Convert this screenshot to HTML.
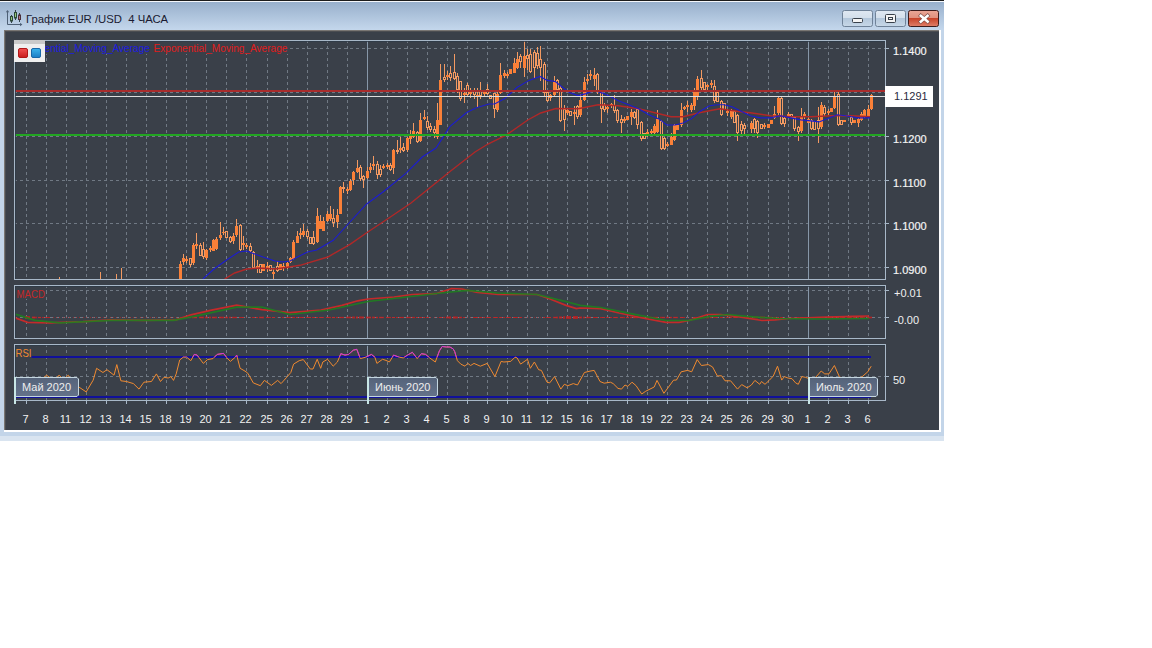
<!DOCTYPE html>
<html><head><meta charset="utf-8"><style>
html,body{margin:0;padding:0;background:#fff;width:1152px;height:648px;overflow:hidden}
svg{display:block;font-family:"Liberation Sans",sans-serif}
</style></head><body>
<svg width="1152" height="648" viewBox="0 0 1152 648">
<defs>
<linearGradient id="tb" x1="0" y1="0" x2="0" y2="1"><stop offset="0" stop-color="#98b0cc"/><stop offset="1" stop-color="#c4d7ec"/></linearGradient>
<linearGradient id="btn" x1="0" y1="0" x2="0" y2="1"><stop offset="0" stop-color="#dfe8f2"/><stop offset="0.5" stop-color="#d3dfeb"/><stop offset="0.5" stop-color="#b3c7db"/><stop offset="1" stop-color="#c8d8e8"/></linearGradient>
<linearGradient id="cls" x1="0" y1="0" x2="0" y2="1"><stop offset="0" stop-color="#eaa696"/><stop offset="0.5" stop-color="#e08f7c"/><stop offset="0.5" stop-color="#c8442a"/><stop offset="1" stop-color="#e0806a"/></linearGradient>
<linearGradient id="rsq" x1="0" y1="0" x2="0" y2="1"><stop offset="0" stop-color="#f25050"/><stop offset="1" stop-color="#c81c1c"/></linearGradient>
<linearGradient id="bsq" x1="0" y1="0" x2="0" y2="1"><stop offset="0" stop-color="#3ab4ec"/><stop offset="1" stop-color="#1a7cc4"/></linearGradient>
<linearGradient id="lbl" x1="0" y1="0" x2="0" y2="1"><stop offset="0" stop-color="#55637a"/><stop offset="1" stop-color="#64728a"/></linearGradient>
</defs>
<rect x="0" y="0" width="944" height="441" fill="#c3d5e9"/>
<rect x="0" y="2" width="944" height="28" fill="url(#tb)"/>
<rect x="0" y="0" width="944" height="1" fill="#1c1c1c"/>
<rect x="0" y="1" width="944" height="1" fill="#f4f7fb"/>
<rect x="0" y="436" width="944" height="5" fill="#d9e4f0"/>
<rect x="4" y="30" width="937" height="402" fill="#ffffff"/>
<rect x="4" y="30" width="935" height="400" fill="#7a7774"/>
<rect x="5" y="31" width="934" height="399" fill="#4b4d51"/>
<rect x="6" y="32" width="933" height="398" fill="#3a4049"/>
<g fill="none" stroke="#4e6076" stroke-width="1"><path d="M7.5 11 V24.5 H21.5"/></g>
<polygon points="5.8,12.3 7.5,10 9.2,12.3" fill="#4e6076"/><polygon points="20,22.8 22.4,24.5 20,26.2" fill="#4e6076"/>
<rect x="11" y="15" width="1" height="8" fill="#34444c"/><rect x="10.5" y="16.5" width="2" height="4.5" fill="#94c47c" stroke="#2e4a38"/>
<rect x="15" y="10" width="1" height="10" fill="#34444c"/><rect x="14.5" y="12.5" width="2" height="5.5" fill="#94c47c" stroke="#2e4a38"/>
<rect x="19" y="13" width="1" height="9" fill="#34444c"/><rect x="18.5" y="15" width="2" height="4.5" fill="#b47482" stroke="#4a2e3a"/>
<text x="26" y="22.5" font-size="11.6" fill="#1a1a30" textLength="142" lengthAdjust="spacingAndGlyphs">График EUR /USD&#160; 4 ЧАСА</text>
<rect x="842.5" y="10.5" width="30" height="16" rx="2" fill="url(#btn)" stroke="#6f8298"/>
<rect x="852.5" y="18.5" width="10" height="4" rx="1" fill="#f4f4f4" stroke="#38404a"/>
<rect x="875.5" y="10.5" width="30" height="16" rx="2" fill="url(#btn)" stroke="#6f8298"/>
<rect x="885.5" y="14.5" width="10" height="8" rx="1" fill="#f4f4f4" stroke="#38404a" stroke-width="1"/>
<rect x="888.5" y="17.5" width="4" height="2" fill="none" stroke="#38404a"/>
<rect x="908.5" y="10.5" width="30" height="16" rx="2" fill="url(#cls)" stroke="#3c1c1c"/>
<path d="M920.8 15.8 L927.6 21.6 M927.6 15.8 L920.8 21.6" stroke="#7a4a44" stroke-width="3.8" stroke-linecap="square"/>
<path d="M920.8 15.8 L927.6 21.6 M927.6 15.8 L920.8 21.6" stroke="#ffffff" stroke-width="2.6" stroke-linecap="square"/>
<line x1="26.5" y1="40" x2="26.5" y2="279" stroke="#707984" stroke-width="1" stroke-dasharray="3 3"/>
<line x1="46.5" y1="40" x2="46.5" y2="279" stroke="#707984" stroke-width="1" stroke-dasharray="3 3"/>
<line x1="66.5" y1="40" x2="66.5" y2="279" stroke="#707984" stroke-width="1" stroke-dasharray="3 3"/>
<line x1="86.5" y1="40" x2="86.5" y2="279" stroke="#707984" stroke-width="1" stroke-dasharray="3 3"/>
<line x1="106.5" y1="40" x2="106.5" y2="279" stroke="#707984" stroke-width="1" stroke-dasharray="3 3"/>
<line x1="126.5" y1="40" x2="126.5" y2="279" stroke="#707984" stroke-width="1" stroke-dasharray="3 3"/>
<line x1="146.5" y1="40" x2="146.5" y2="279" stroke="#707984" stroke-width="1" stroke-dasharray="3 3"/>
<line x1="166.5" y1="40" x2="166.5" y2="279" stroke="#707984" stroke-width="1" stroke-dasharray="3 3"/>
<line x1="186.5" y1="40" x2="186.5" y2="279" stroke="#707984" stroke-width="1" stroke-dasharray="3 3"/>
<line x1="206.5" y1="40" x2="206.5" y2="279" stroke="#707984" stroke-width="1" stroke-dasharray="3 3"/>
<line x1="226.5" y1="40" x2="226.5" y2="279" stroke="#707984" stroke-width="1" stroke-dasharray="3 3"/>
<line x1="246.5" y1="40" x2="246.5" y2="279" stroke="#707984" stroke-width="1" stroke-dasharray="3 3"/>
<line x1="267.5" y1="40" x2="267.5" y2="279" stroke="#707984" stroke-width="1" stroke-dasharray="3 3"/>
<line x1="287.5" y1="40" x2="287.5" y2="279" stroke="#707984" stroke-width="1" stroke-dasharray="3 3"/>
<line x1="307.5" y1="40" x2="307.5" y2="279" stroke="#707984" stroke-width="1" stroke-dasharray="3 3"/>
<line x1="327.5" y1="40" x2="327.5" y2="279" stroke="#707984" stroke-width="1" stroke-dasharray="3 3"/>
<line x1="347.5" y1="40" x2="347.5" y2="279" stroke="#707984" stroke-width="1" stroke-dasharray="3 3"/>
<line x1="387.5" y1="40" x2="387.5" y2="279" stroke="#707984" stroke-width="1" stroke-dasharray="3 3"/>
<line x1="407.5" y1="40" x2="407.5" y2="279" stroke="#707984" stroke-width="1" stroke-dasharray="3 3"/>
<line x1="427.5" y1="40" x2="427.5" y2="279" stroke="#707984" stroke-width="1" stroke-dasharray="3 3"/>
<line x1="447.5" y1="40" x2="447.5" y2="279" stroke="#707984" stroke-width="1" stroke-dasharray="3 3"/>
<line x1="467.5" y1="40" x2="467.5" y2="279" stroke="#707984" stroke-width="1" stroke-dasharray="3 3"/>
<line x1="487.5" y1="40" x2="487.5" y2="279" stroke="#707984" stroke-width="1" stroke-dasharray="3 3"/>
<line x1="507.5" y1="40" x2="507.5" y2="279" stroke="#707984" stroke-width="1" stroke-dasharray="3 3"/>
<line x1="527.5" y1="40" x2="527.5" y2="279" stroke="#707984" stroke-width="1" stroke-dasharray="3 3"/>
<line x1="547.5" y1="40" x2="547.5" y2="279" stroke="#707984" stroke-width="1" stroke-dasharray="3 3"/>
<line x1="567.5" y1="40" x2="567.5" y2="279" stroke="#707984" stroke-width="1" stroke-dasharray="3 3"/>
<line x1="587.5" y1="40" x2="587.5" y2="279" stroke="#707984" stroke-width="1" stroke-dasharray="3 3"/>
<line x1="607.5" y1="40" x2="607.5" y2="279" stroke="#707984" stroke-width="1" stroke-dasharray="3 3"/>
<line x1="627.5" y1="40" x2="627.5" y2="279" stroke="#707984" stroke-width="1" stroke-dasharray="3 3"/>
<line x1="647.5" y1="40" x2="647.5" y2="279" stroke="#707984" stroke-width="1" stroke-dasharray="3 3"/>
<line x1="667.5" y1="40" x2="667.5" y2="279" stroke="#707984" stroke-width="1" stroke-dasharray="3 3"/>
<line x1="687.5" y1="40" x2="687.5" y2="279" stroke="#707984" stroke-width="1" stroke-dasharray="3 3"/>
<line x1="707.5" y1="40" x2="707.5" y2="279" stroke="#707984" stroke-width="1" stroke-dasharray="3 3"/>
<line x1="727.5" y1="40" x2="727.5" y2="279" stroke="#707984" stroke-width="1" stroke-dasharray="3 3"/>
<line x1="747.5" y1="40" x2="747.5" y2="279" stroke="#707984" stroke-width="1" stroke-dasharray="3 3"/>
<line x1="768.5" y1="40" x2="768.5" y2="279" stroke="#707984" stroke-width="1" stroke-dasharray="3 3"/>
<line x1="788.5" y1="40" x2="788.5" y2="279" stroke="#707984" stroke-width="1" stroke-dasharray="3 3"/>
<line x1="828.5" y1="40" x2="828.5" y2="279" stroke="#707984" stroke-width="1" stroke-dasharray="3 3"/>
<line x1="848.5" y1="40" x2="848.5" y2="279" stroke="#707984" stroke-width="1" stroke-dasharray="3 3"/>
<line x1="868.5" y1="40" x2="868.5" y2="279" stroke="#707984" stroke-width="1" stroke-dasharray="3 3"/>
<line x1="26.5" y1="285" x2="26.5" y2="338" stroke="#707984" stroke-width="1" stroke-dasharray="3 3"/>
<line x1="46.5" y1="285" x2="46.5" y2="338" stroke="#707984" stroke-width="1" stroke-dasharray="3 3"/>
<line x1="66.5" y1="285" x2="66.5" y2="338" stroke="#707984" stroke-width="1" stroke-dasharray="3 3"/>
<line x1="86.5" y1="285" x2="86.5" y2="338" stroke="#707984" stroke-width="1" stroke-dasharray="3 3"/>
<line x1="106.5" y1="285" x2="106.5" y2="338" stroke="#707984" stroke-width="1" stroke-dasharray="3 3"/>
<line x1="126.5" y1="285" x2="126.5" y2="338" stroke="#707984" stroke-width="1" stroke-dasharray="3 3"/>
<line x1="146.5" y1="285" x2="146.5" y2="338" stroke="#707984" stroke-width="1" stroke-dasharray="3 3"/>
<line x1="166.5" y1="285" x2="166.5" y2="338" stroke="#707984" stroke-width="1" stroke-dasharray="3 3"/>
<line x1="186.5" y1="285" x2="186.5" y2="338" stroke="#707984" stroke-width="1" stroke-dasharray="3 3"/>
<line x1="206.5" y1="285" x2="206.5" y2="338" stroke="#707984" stroke-width="1" stroke-dasharray="3 3"/>
<line x1="226.5" y1="285" x2="226.5" y2="338" stroke="#707984" stroke-width="1" stroke-dasharray="3 3"/>
<line x1="246.5" y1="285" x2="246.5" y2="338" stroke="#707984" stroke-width="1" stroke-dasharray="3 3"/>
<line x1="267.5" y1="285" x2="267.5" y2="338" stroke="#707984" stroke-width="1" stroke-dasharray="3 3"/>
<line x1="287.5" y1="285" x2="287.5" y2="338" stroke="#707984" stroke-width="1" stroke-dasharray="3 3"/>
<line x1="307.5" y1="285" x2="307.5" y2="338" stroke="#707984" stroke-width="1" stroke-dasharray="3 3"/>
<line x1="327.5" y1="285" x2="327.5" y2="338" stroke="#707984" stroke-width="1" stroke-dasharray="3 3"/>
<line x1="347.5" y1="285" x2="347.5" y2="338" stroke="#707984" stroke-width="1" stroke-dasharray="3 3"/>
<line x1="387.5" y1="285" x2="387.5" y2="338" stroke="#707984" stroke-width="1" stroke-dasharray="3 3"/>
<line x1="407.5" y1="285" x2="407.5" y2="338" stroke="#707984" stroke-width="1" stroke-dasharray="3 3"/>
<line x1="427.5" y1="285" x2="427.5" y2="338" stroke="#707984" stroke-width="1" stroke-dasharray="3 3"/>
<line x1="447.5" y1="285" x2="447.5" y2="338" stroke="#707984" stroke-width="1" stroke-dasharray="3 3"/>
<line x1="467.5" y1="285" x2="467.5" y2="338" stroke="#707984" stroke-width="1" stroke-dasharray="3 3"/>
<line x1="487.5" y1="285" x2="487.5" y2="338" stroke="#707984" stroke-width="1" stroke-dasharray="3 3"/>
<line x1="507.5" y1="285" x2="507.5" y2="338" stroke="#707984" stroke-width="1" stroke-dasharray="3 3"/>
<line x1="527.5" y1="285" x2="527.5" y2="338" stroke="#707984" stroke-width="1" stroke-dasharray="3 3"/>
<line x1="547.5" y1="285" x2="547.5" y2="338" stroke="#707984" stroke-width="1" stroke-dasharray="3 3"/>
<line x1="567.5" y1="285" x2="567.5" y2="338" stroke="#707984" stroke-width="1" stroke-dasharray="3 3"/>
<line x1="587.5" y1="285" x2="587.5" y2="338" stroke="#707984" stroke-width="1" stroke-dasharray="3 3"/>
<line x1="607.5" y1="285" x2="607.5" y2="338" stroke="#707984" stroke-width="1" stroke-dasharray="3 3"/>
<line x1="627.5" y1="285" x2="627.5" y2="338" stroke="#707984" stroke-width="1" stroke-dasharray="3 3"/>
<line x1="647.5" y1="285" x2="647.5" y2="338" stroke="#707984" stroke-width="1" stroke-dasharray="3 3"/>
<line x1="667.5" y1="285" x2="667.5" y2="338" stroke="#707984" stroke-width="1" stroke-dasharray="3 3"/>
<line x1="687.5" y1="285" x2="687.5" y2="338" stroke="#707984" stroke-width="1" stroke-dasharray="3 3"/>
<line x1="707.5" y1="285" x2="707.5" y2="338" stroke="#707984" stroke-width="1" stroke-dasharray="3 3"/>
<line x1="727.5" y1="285" x2="727.5" y2="338" stroke="#707984" stroke-width="1" stroke-dasharray="3 3"/>
<line x1="747.5" y1="285" x2="747.5" y2="338" stroke="#707984" stroke-width="1" stroke-dasharray="3 3"/>
<line x1="768.5" y1="285" x2="768.5" y2="338" stroke="#707984" stroke-width="1" stroke-dasharray="3 3"/>
<line x1="788.5" y1="285" x2="788.5" y2="338" stroke="#707984" stroke-width="1" stroke-dasharray="3 3"/>
<line x1="828.5" y1="285" x2="828.5" y2="338" stroke="#707984" stroke-width="1" stroke-dasharray="3 3"/>
<line x1="848.5" y1="285" x2="848.5" y2="338" stroke="#707984" stroke-width="1" stroke-dasharray="3 3"/>
<line x1="868.5" y1="285" x2="868.5" y2="338" stroke="#707984" stroke-width="1" stroke-dasharray="3 3"/>
<line x1="26.5" y1="344" x2="26.5" y2="400" stroke="#707984" stroke-width="1" stroke-dasharray="3 3"/>
<line x1="46.5" y1="344" x2="46.5" y2="400" stroke="#707984" stroke-width="1" stroke-dasharray="3 3"/>
<line x1="66.5" y1="344" x2="66.5" y2="400" stroke="#707984" stroke-width="1" stroke-dasharray="3 3"/>
<line x1="86.5" y1="344" x2="86.5" y2="400" stroke="#707984" stroke-width="1" stroke-dasharray="3 3"/>
<line x1="106.5" y1="344" x2="106.5" y2="400" stroke="#707984" stroke-width="1" stroke-dasharray="3 3"/>
<line x1="126.5" y1="344" x2="126.5" y2="400" stroke="#707984" stroke-width="1" stroke-dasharray="3 3"/>
<line x1="146.5" y1="344" x2="146.5" y2="400" stroke="#707984" stroke-width="1" stroke-dasharray="3 3"/>
<line x1="166.5" y1="344" x2="166.5" y2="400" stroke="#707984" stroke-width="1" stroke-dasharray="3 3"/>
<line x1="186.5" y1="344" x2="186.5" y2="400" stroke="#707984" stroke-width="1" stroke-dasharray="3 3"/>
<line x1="206.5" y1="344" x2="206.5" y2="400" stroke="#707984" stroke-width="1" stroke-dasharray="3 3"/>
<line x1="226.5" y1="344" x2="226.5" y2="400" stroke="#707984" stroke-width="1" stroke-dasharray="3 3"/>
<line x1="246.5" y1="344" x2="246.5" y2="400" stroke="#707984" stroke-width="1" stroke-dasharray="3 3"/>
<line x1="267.5" y1="344" x2="267.5" y2="400" stroke="#707984" stroke-width="1" stroke-dasharray="3 3"/>
<line x1="287.5" y1="344" x2="287.5" y2="400" stroke="#707984" stroke-width="1" stroke-dasharray="3 3"/>
<line x1="307.5" y1="344" x2="307.5" y2="400" stroke="#707984" stroke-width="1" stroke-dasharray="3 3"/>
<line x1="327.5" y1="344" x2="327.5" y2="400" stroke="#707984" stroke-width="1" stroke-dasharray="3 3"/>
<line x1="347.5" y1="344" x2="347.5" y2="400" stroke="#707984" stroke-width="1" stroke-dasharray="3 3"/>
<line x1="387.5" y1="344" x2="387.5" y2="400" stroke="#707984" stroke-width="1" stroke-dasharray="3 3"/>
<line x1="407.5" y1="344" x2="407.5" y2="400" stroke="#707984" stroke-width="1" stroke-dasharray="3 3"/>
<line x1="427.5" y1="344" x2="427.5" y2="400" stroke="#707984" stroke-width="1" stroke-dasharray="3 3"/>
<line x1="447.5" y1="344" x2="447.5" y2="400" stroke="#707984" stroke-width="1" stroke-dasharray="3 3"/>
<line x1="467.5" y1="344" x2="467.5" y2="400" stroke="#707984" stroke-width="1" stroke-dasharray="3 3"/>
<line x1="487.5" y1="344" x2="487.5" y2="400" stroke="#707984" stroke-width="1" stroke-dasharray="3 3"/>
<line x1="507.5" y1="344" x2="507.5" y2="400" stroke="#707984" stroke-width="1" stroke-dasharray="3 3"/>
<line x1="527.5" y1="344" x2="527.5" y2="400" stroke="#707984" stroke-width="1" stroke-dasharray="3 3"/>
<line x1="547.5" y1="344" x2="547.5" y2="400" stroke="#707984" stroke-width="1" stroke-dasharray="3 3"/>
<line x1="567.5" y1="344" x2="567.5" y2="400" stroke="#707984" stroke-width="1" stroke-dasharray="3 3"/>
<line x1="587.5" y1="344" x2="587.5" y2="400" stroke="#707984" stroke-width="1" stroke-dasharray="3 3"/>
<line x1="607.5" y1="344" x2="607.5" y2="400" stroke="#707984" stroke-width="1" stroke-dasharray="3 3"/>
<line x1="627.5" y1="344" x2="627.5" y2="400" stroke="#707984" stroke-width="1" stroke-dasharray="3 3"/>
<line x1="647.5" y1="344" x2="647.5" y2="400" stroke="#707984" stroke-width="1" stroke-dasharray="3 3"/>
<line x1="667.5" y1="344" x2="667.5" y2="400" stroke="#707984" stroke-width="1" stroke-dasharray="3 3"/>
<line x1="687.5" y1="344" x2="687.5" y2="400" stroke="#707984" stroke-width="1" stroke-dasharray="3 3"/>
<line x1="707.5" y1="344" x2="707.5" y2="400" stroke="#707984" stroke-width="1" stroke-dasharray="3 3"/>
<line x1="727.5" y1="344" x2="727.5" y2="400" stroke="#707984" stroke-width="1" stroke-dasharray="3 3"/>
<line x1="747.5" y1="344" x2="747.5" y2="400" stroke="#707984" stroke-width="1" stroke-dasharray="3 3"/>
<line x1="768.5" y1="344" x2="768.5" y2="400" stroke="#707984" stroke-width="1" stroke-dasharray="3 3"/>
<line x1="788.5" y1="344" x2="788.5" y2="400" stroke="#707984" stroke-width="1" stroke-dasharray="3 3"/>
<line x1="828.5" y1="344" x2="828.5" y2="400" stroke="#707984" stroke-width="1" stroke-dasharray="3 3"/>
<line x1="848.5" y1="344" x2="848.5" y2="400" stroke="#707984" stroke-width="1" stroke-dasharray="3 3"/>
<line x1="868.5" y1="344" x2="868.5" y2="400" stroke="#707984" stroke-width="1" stroke-dasharray="3 3"/>
<line x1="14" y1="48.5" x2="885" y2="48.5" stroke="#707984" stroke-dasharray="3 3"/>
<line x1="14" y1="92.5" x2="885" y2="92.5" stroke="#707984" stroke-dasharray="3 3"/>
<line x1="14" y1="136.5" x2="885" y2="136.5" stroke="#707984" stroke-dasharray="3 3"/>
<line x1="14" y1="180.5" x2="885" y2="180.5" stroke="#707984" stroke-dasharray="3 3"/>
<line x1="14" y1="223.5" x2="885" y2="223.5" stroke="#707984" stroke-dasharray="3 3"/>
<line x1="14" y1="267.5" x2="885" y2="267.5" stroke="#707984" stroke-dasharray="3 3"/>
<line x1="14" y1="290.5" x2="885" y2="290.5" stroke="#707984" stroke-dasharray="3 3"/>
<line x1="14" y1="317.5" x2="885" y2="317.5" stroke="#707984" stroke-dasharray="3 3"/>
<line x1="14" y1="376.5" x2="885" y2="376.5" stroke="#707984" stroke-dasharray="3 3"/>
<line x1="367.5" y1="40" x2="367.5" y2="279" stroke="#8797a8" stroke-width="1"/>
<line x1="367.5" y1="285" x2="367.5" y2="338" stroke="#8797a8" stroke-width="1"/>
<line x1="367.5" y1="344" x2="367.5" y2="400" stroke="#8797a8" stroke-width="1"/>
<line x1="808.5" y1="40" x2="808.5" y2="279" stroke="#8797a8" stroke-width="1"/>
<line x1="808.5" y1="285" x2="808.5" y2="338" stroke="#8797a8" stroke-width="1"/>
<line x1="808.5" y1="344" x2="808.5" y2="400" stroke="#8797a8" stroke-width="1"/>
<rect x="15" y="41" width="275" height="13" fill="#3a4049"/>
<text x="16" y="52" font-size="10.1" fill="#1c1ce0">Exponential_Moving_Average</text>
<text x="153.5" y="52" font-size="10.1" fill="#e01c1c">Exponential_Moving_Average</text>
<clipPath id="cm"><rect x="15" y="41" width="870" height="238"/></clipPath>
<g clip-path="url(#cm)">
<rect x="59" y="277" width="1" height="2" fill="#f39a62"/>
<rect x="100" y="272" width="1" height="7" fill="#f39a62"/>
<rect x="116" y="274" width="1" height="5" fill="#f39a62"/>
<rect x="121" y="268" width="1" height="11" fill="#f39a62"/>
<rect x="180" y="261" width="1" height="18" fill="#f39a62"/>
<rect x="179" y="264" width="3" height="15" fill="#fa8038"/>
<rect x="183" y="254" width="1" height="11" fill="#f39a62"/>
<rect x="182" y="258" width="3" height="4" fill="#fa8038"/>
<rect x="186" y="256" width="1" height="7" fill="#f39a62"/>
<rect x="185" y="259" width="3" height="2" fill="#fa8038"/>
<rect x="190" y="258" width="1" height="9" fill="#f39a62"/>
<rect x="189.5" y="258.5" width="2" height="6" fill="#3a4049" stroke="#f39a62" stroke-width="1"/>
<rect x="193" y="243" width="1" height="22" fill="#f39a62"/>
<rect x="192" y="245" width="3" height="18" fill="#fa8038"/>
<rect x="196" y="233" width="1" height="16" fill="#f39a62"/>
<rect x="195" y="244" width="3" height="2" fill="#fa8038"/>
<rect x="200" y="243" width="1" height="13" fill="#f39a62"/>
<rect x="199.5" y="245.5" width="2" height="10" fill="#3a4049" stroke="#f39a62" stroke-width="1"/>
<rect x="203" y="242" width="1" height="17" fill="#f39a62"/>
<rect x="202.5" y="249.5" width="2" height="7" fill="#3a4049" stroke="#f39a62" stroke-width="1"/>
<rect x="206" y="249" width="1" height="11" fill="#f39a62"/>
<rect x="205" y="250" width="3" height="8" fill="#fa8038"/>
<rect x="210" y="246" width="1" height="6" fill="#f39a62"/>
<rect x="209" y="248" width="3" height="2" fill="#fa8038"/>
<rect x="213" y="239" width="1" height="12" fill="#f39a62"/>
<rect x="212" y="240" width="3" height="11" fill="#fa8038"/>
<rect x="216" y="237" width="1" height="13" fill="#f39a62"/>
<rect x="215" y="239" width="3" height="10" fill="#fa8038"/>
<rect x="220" y="222" width="1" height="18" fill="#f39a62"/>
<rect x="219" y="235" width="3" height="3" fill="#fa8038"/>
<rect x="223" y="227" width="1" height="8" fill="#f39a62"/>
<rect x="222" y="232" width="3" height="1" fill="#fa8038"/>
<rect x="226" y="231" width="1" height="7" fill="#f39a62"/>
<rect x="225.5" y="231.5" width="2" height="6" fill="#3a4049" stroke="#f39a62" stroke-width="1"/>
<rect x="230" y="236" width="1" height="7" fill="#f39a62"/>
<rect x="229.5" y="237.5" width="2" height="4" fill="#3a4049" stroke="#f39a62" stroke-width="1"/>
<rect x="233" y="233" width="1" height="11" fill="#f39a62"/>
<rect x="232" y="236" width="3" height="5" fill="#fa8038"/>
<rect x="236" y="219" width="1" height="18" fill="#f39a62"/>
<rect x="235" y="226" width="3" height="9" fill="#fa8038"/>
<rect x="240" y="224" width="1" height="27" fill="#f39a62"/>
<rect x="239.5" y="225.5" width="2" height="24" fill="#3a4049" stroke="#f39a62" stroke-width="1"/>
<rect x="243" y="236" width="1" height="14" fill="#f39a62"/>
<rect x="242" y="243" width="3" height="2" fill="#fa8038"/>
<rect x="246" y="243" width="1" height="6" fill="#f39a62"/>
<rect x="245" y="245" width="3" height="2" fill="#fa8038"/>
<rect x="250" y="243" width="1" height="9" fill="#f39a62"/>
<rect x="249.5" y="246.5" width="2" height="4" fill="#3a4049" stroke="#f39a62" stroke-width="1"/>
<rect x="253" y="251" width="1" height="18" fill="#f39a62"/>
<rect x="252.5" y="252.5" width="2" height="15" fill="#3a4049" stroke="#f39a62" stroke-width="1"/>
<rect x="257" y="260" width="1" height="13" fill="#f39a62"/>
<rect x="256" y="266" width="3" height="3" fill="#fa8038"/>
<rect x="260" y="264" width="1" height="9" fill="#f39a62"/>
<rect x="259.5" y="264.5" width="2" height="8" fill="#3a4049" stroke="#f39a62" stroke-width="1"/>
<rect x="263" y="264" width="1" height="7" fill="#f39a62"/>
<rect x="262" y="264" width="3" height="7" fill="#fa8038"/>
<rect x="267" y="262" width="1" height="10" fill="#f39a62"/>
<rect x="266" y="266" width="3" height="2" fill="#fa8038"/>
<rect x="270" y="265" width="1" height="6" fill="#f39a62"/>
<rect x="269.5" y="265.5" width="2" height="5" fill="#3a4049" stroke="#f39a62" stroke-width="1"/>
<rect x="273" y="269" width="1" height="10" fill="#f39a62"/>
<rect x="272" y="272" width="3" height="2" fill="#fa8038"/>
<rect x="277" y="261" width="1" height="11" fill="#f39a62"/>
<rect x="276.5" y="266.5" width="2" height="4" fill="#3a4049" stroke="#f39a62" stroke-width="1"/>
<rect x="280" y="264" width="1" height="6" fill="#f39a62"/>
<rect x="279" y="264" width="3" height="6" fill="#fa8038"/>
<rect x="283" y="263" width="1" height="8" fill="#f39a62"/>
<rect x="282" y="266" width="3" height="2" fill="#fa8038"/>
<rect x="287" y="262" width="1" height="7" fill="#f39a62"/>
<rect x="286" y="263" width="3" height="5" fill="#fa8038"/>
<rect x="290" y="257" width="1" height="6" fill="#f39a62"/>
<rect x="289" y="258" width="3" height="4" fill="#fa8038"/>
<rect x="293" y="240" width="1" height="20" fill="#f39a62"/>
<rect x="292" y="242" width="3" height="17" fill="#fa8038"/>
<rect x="297" y="231" width="1" height="12" fill="#f39a62"/>
<rect x="296" y="236" width="3" height="7" fill="#fa8038"/>
<rect x="300" y="228" width="1" height="11" fill="#f39a62"/>
<rect x="299" y="233" width="3" height="2" fill="#fa8038"/>
<rect x="303" y="224" width="1" height="13" fill="#f39a62"/>
<rect x="302" y="231" width="3" height="4" fill="#fa8038"/>
<rect x="307" y="229" width="1" height="10" fill="#f39a62"/>
<rect x="306.5" y="231.5" width="2" height="5" fill="#3a4049" stroke="#f39a62" stroke-width="1"/>
<rect x="310" y="237" width="1" height="7" fill="#f39a62"/>
<rect x="309.5" y="237.5" width="2" height="6" fill="#3a4049" stroke="#f39a62" stroke-width="1"/>
<rect x="313" y="231" width="1" height="14" fill="#f39a62"/>
<rect x="312.5" y="237.5" width="2" height="6" fill="#3a4049" stroke="#f39a62" stroke-width="1"/>
<rect x="317" y="208" width="1" height="35" fill="#f39a62"/>
<rect x="316" y="216" width="3" height="26" fill="#fa8038"/>
<rect x="320" y="215" width="1" height="14" fill="#f39a62"/>
<rect x="319" y="221" width="3" height="8" fill="#fa8038"/>
<rect x="323" y="217" width="1" height="14" fill="#f39a62"/>
<rect x="322" y="221" width="3" height="10" fill="#fa8038"/>
<rect x="327" y="211" width="1" height="11" fill="#f39a62"/>
<rect x="326" y="214" width="3" height="7" fill="#fa8038"/>
<rect x="330" y="206" width="1" height="15" fill="#f39a62"/>
<rect x="329" y="214" width="3" height="5" fill="#fa8038"/>
<rect x="333" y="209" width="1" height="18" fill="#f39a62"/>
<rect x="332.5" y="218.5" width="2" height="4" fill="#3a4049" stroke="#f39a62" stroke-width="1"/>
<rect x="337" y="209" width="1" height="19" fill="#f39a62"/>
<rect x="336" y="215" width="3" height="7" fill="#fa8038"/>
<rect x="340" y="186" width="1" height="28" fill="#f39a62"/>
<rect x="339" y="187" width="3" height="27" fill="#fa8038"/>
<rect x="343" y="182" width="1" height="11" fill="#f39a62"/>
<rect x="342.5" y="187.5" width="2" height="1" fill="#3a4049" stroke="#f39a62" stroke-width="1"/>
<rect x="347" y="187" width="1" height="7" fill="#f39a62"/>
<rect x="346" y="189" width="3" height="2" fill="#fa8038"/>
<rect x="350" y="179" width="1" height="12" fill="#f39a62"/>
<rect x="349" y="181" width="3" height="9" fill="#fa8038"/>
<rect x="353" y="171" width="1" height="14" fill="#f39a62"/>
<rect x="352" y="172" width="3" height="8" fill="#fa8038"/>
<rect x="357" y="160" width="1" height="13" fill="#f39a62"/>
<rect x="356" y="168" width="3" height="4" fill="#fa8038"/>
<rect x="360" y="165" width="1" height="16" fill="#f39a62"/>
<rect x="359.5" y="167.5" width="2" height="11" fill="#3a4049" stroke="#f39a62" stroke-width="1"/>
<rect x="363" y="175" width="1" height="13" fill="#f39a62"/>
<rect x="362.5" y="176.5" width="2" height="3" fill="#3a4049" stroke="#f39a62" stroke-width="1"/>
<rect x="367" y="167" width="1" height="12" fill="#f39a62"/>
<rect x="366" y="171" width="3" height="7" fill="#fa8038"/>
<rect x="370" y="163" width="1" height="10" fill="#f39a62"/>
<rect x="369" y="167" width="3" height="3" fill="#fa8038"/>
<rect x="373" y="156" width="1" height="14" fill="#f39a62"/>
<rect x="372" y="164" width="3" height="2" fill="#fa8038"/>
<rect x="377" y="161" width="1" height="18" fill="#f39a62"/>
<rect x="376.5" y="164.5" width="2" height="10" fill="#3a4049" stroke="#f39a62" stroke-width="1"/>
<rect x="380" y="165" width="1" height="12" fill="#f39a62"/>
<rect x="379.5" y="169.5" width="2" height="5" fill="#3a4049" stroke="#f39a62" stroke-width="1"/>
<rect x="383" y="164" width="1" height="5" fill="#f39a62"/>
<rect x="382" y="166" width="3" height="2" fill="#fa8038"/>
<rect x="387" y="163" width="1" height="6" fill="#f39a62"/>
<rect x="386" y="165" width="3" height="2" fill="#fa8038"/>
<rect x="390" y="163" width="1" height="8" fill="#f39a62"/>
<rect x="389.5" y="165.5" width="2" height="4" fill="#3a4049" stroke="#f39a62" stroke-width="1"/>
<rect x="393" y="149" width="1" height="25" fill="#f39a62"/>
<rect x="392" y="150" width="3" height="18" fill="#fa8038"/>
<rect x="397" y="140" width="1" height="14" fill="#f39a62"/>
<rect x="396.5" y="150.5" width="2" height="1" fill="#3a4049" stroke="#f39a62" stroke-width="1"/>
<rect x="400" y="137" width="1" height="16" fill="#f39a62"/>
<rect x="399" y="148" width="3" height="2" fill="#fa8038"/>
<rect x="403" y="143" width="1" height="9" fill="#f39a62"/>
<rect x="402.5" y="147.5" width="2" height="3" fill="#3a4049" stroke="#f39a62" stroke-width="1"/>
<rect x="407" y="137" width="1" height="15" fill="#f39a62"/>
<rect x="406" y="138" width="3" height="12" fill="#fa8038"/>
<rect x="410" y="130" width="1" height="14" fill="#f39a62"/>
<rect x="409" y="134" width="3" height="5" fill="#fa8038"/>
<rect x="413" y="123" width="1" height="15" fill="#f39a62"/>
<rect x="412" y="131" width="3" height="6" fill="#fa8038"/>
<rect x="417" y="131" width="1" height="12" fill="#f39a62"/>
<rect x="416.5" y="132.5" width="2" height="9" fill="#3a4049" stroke="#f39a62" stroke-width="1"/>
<rect x="420" y="113" width="1" height="29" fill="#f39a62"/>
<rect x="419" y="120" width="3" height="21" fill="#fa8038"/>
<rect x="424" y="110" width="1" height="10" fill="#f39a62"/>
<rect x="423" y="117" width="3" height="2" fill="#fa8038"/>
<rect x="427" y="116" width="1" height="14" fill="#f39a62"/>
<rect x="426.5" y="121.5" width="2" height="6" fill="#3a4049" stroke="#f39a62" stroke-width="1"/>
<rect x="430" y="123" width="1" height="9" fill="#f39a62"/>
<rect x="429.5" y="126.5" width="2" height="3" fill="#3a4049" stroke="#f39a62" stroke-width="1"/>
<rect x="434" y="126" width="1" height="12" fill="#f39a62"/>
<rect x="433.5" y="129.5" width="2" height="3" fill="#3a4049" stroke="#f39a62" stroke-width="1"/>
<rect x="437" y="103" width="1" height="36" fill="#f39a62"/>
<rect x="436" y="120" width="3" height="17" fill="#fa8038"/>
<rect x="440" y="64" width="1" height="61" fill="#f39a62"/>
<rect x="439" y="80" width="3" height="45" fill="#fa8038"/>
<rect x="444" y="64" width="1" height="18" fill="#f39a62"/>
<rect x="443.5" y="77.5" width="2" height="2" fill="#3a4049" stroke="#f39a62" stroke-width="1"/>
<rect x="447" y="71" width="1" height="9" fill="#f39a62"/>
<rect x="446" y="75" width="3" height="2" fill="#fa8038"/>
<rect x="450" y="66" width="1" height="15" fill="#f39a62"/>
<rect x="449.5" y="73.5" width="2" height="4" fill="#3a4049" stroke="#f39a62" stroke-width="1"/>
<rect x="454" y="54" width="1" height="26" fill="#f39a62"/>
<rect x="453.5" y="72.5" width="2" height="6" fill="#3a4049" stroke="#f39a62" stroke-width="1"/>
<rect x="457" y="73" width="1" height="20" fill="#f39a62"/>
<rect x="456.5" y="76.5" width="2" height="13" fill="#3a4049" stroke="#f39a62" stroke-width="1"/>
<rect x="460" y="81" width="1" height="20" fill="#f39a62"/>
<rect x="459.5" y="81.5" width="2" height="17" fill="#3a4049" stroke="#f39a62" stroke-width="1"/>
<rect x="464" y="88" width="1" height="15" fill="#f39a62"/>
<rect x="463" y="93" width="3" height="2" fill="#fa8038"/>
<rect x="467" y="83" width="1" height="14" fill="#f39a62"/>
<rect x="466.5" y="85.5" width="2" height="9" fill="#3a4049" stroke="#f39a62" stroke-width="1"/>
<rect x="470" y="88" width="1" height="10" fill="#f39a62"/>
<rect x="469" y="92" width="3" height="2" fill="#fa8038"/>
<rect x="474" y="88" width="1" height="11" fill="#f39a62"/>
<rect x="473.5" y="91.5" width="2" height="3" fill="#3a4049" stroke="#f39a62" stroke-width="1"/>
<rect x="477" y="88" width="1" height="19" fill="#f39a62"/>
<rect x="476" y="95" width="3" height="2" fill="#fa8038"/>
<rect x="480" y="82" width="1" height="17" fill="#f39a62"/>
<rect x="479.5" y="91.5" width="2" height="4" fill="#3a4049" stroke="#f39a62" stroke-width="1"/>
<rect x="484" y="90" width="1" height="6" fill="#f39a62"/>
<rect x="483" y="92" width="3" height="2" fill="#fa8038"/>
<rect x="487" y="84" width="1" height="11" fill="#f39a62"/>
<rect x="486.5" y="89.5" width="2" height="4" fill="#3a4049" stroke="#f39a62" stroke-width="1"/>
<rect x="490" y="95" width="1" height="4" fill="#f39a62"/>
<rect x="489.5" y="95.5" width="2" height="3" fill="#3a4049" stroke="#f39a62" stroke-width="1"/>
<rect x="494" y="93" width="1" height="25" fill="#f39a62"/>
<rect x="493.5" y="93.5" width="2" height="15" fill="#3a4049" stroke="#f39a62" stroke-width="1"/>
<rect x="497" y="92" width="1" height="20" fill="#f39a62"/>
<rect x="496" y="94" width="3" height="16" fill="#fa8038"/>
<rect x="500" y="63" width="1" height="31" fill="#f39a62"/>
<rect x="499" y="75" width="3" height="18" fill="#fa8038"/>
<rect x="504" y="70" width="1" height="8" fill="#f39a62"/>
<rect x="503" y="73" width="3" height="3" fill="#fa8038"/>
<rect x="507" y="72" width="1" height="6" fill="#f39a62"/>
<rect x="506" y="74" width="3" height="2" fill="#fa8038"/>
<rect x="510" y="69" width="1" height="5" fill="#f39a62"/>
<rect x="509" y="69" width="3" height="5" fill="#fa8038"/>
<rect x="514" y="58" width="1" height="15" fill="#f39a62"/>
<rect x="513" y="63" width="3" height="10" fill="#fa8038"/>
<rect x="517" y="52" width="1" height="17" fill="#f39a62"/>
<rect x="516" y="59" width="3" height="9" fill="#fa8038"/>
<rect x="520" y="54" width="1" height="14" fill="#f39a62"/>
<rect x="519.5" y="56.5" width="2" height="5" fill="#3a4049" stroke="#f39a62" stroke-width="1"/>
<rect x="524" y="40" width="1" height="37" fill="#f39a62"/>
<rect x="523" y="56" width="3" height="12" fill="#fa8038"/>
<rect x="527" y="49" width="1" height="21" fill="#f39a62"/>
<rect x="526.5" y="55.5" width="2" height="3" fill="#3a4049" stroke="#f39a62" stroke-width="1"/>
<rect x="530" y="49" width="1" height="24" fill="#f39a62"/>
<rect x="529.5" y="54.5" width="2" height="17" fill="#3a4049" stroke="#f39a62" stroke-width="1"/>
<rect x="534" y="50" width="1" height="28" fill="#f39a62"/>
<rect x="533.5" y="52.5" width="2" height="15" fill="#3a4049" stroke="#f39a62" stroke-width="1"/>
<rect x="537" y="47" width="1" height="22" fill="#f39a62"/>
<rect x="536.5" y="53.5" width="2" height="12" fill="#3a4049" stroke="#f39a62" stroke-width="1"/>
<rect x="540" y="46" width="1" height="35" fill="#f39a62"/>
<rect x="539.5" y="59.5" width="2" height="8" fill="#3a4049" stroke="#f39a62" stroke-width="1"/>
<rect x="544" y="62" width="1" height="34" fill="#f39a62"/>
<rect x="543.5" y="64.5" width="2" height="28" fill="#3a4049" stroke="#f39a62" stroke-width="1"/>
<rect x="547" y="90" width="1" height="12" fill="#f39a62"/>
<rect x="546.5" y="92.5" width="2" height="8" fill="#3a4049" stroke="#f39a62" stroke-width="1"/>
<rect x="550" y="94" width="1" height="7" fill="#f39a62"/>
<rect x="549" y="95" width="3" height="3" fill="#fa8038"/>
<rect x="554" y="76" width="1" height="21" fill="#f39a62"/>
<rect x="553" y="82" width="3" height="13" fill="#fa8038"/>
<rect x="557" y="79" width="1" height="14" fill="#f39a62"/>
<rect x="556.5" y="80.5" width="2" height="9" fill="#3a4049" stroke="#f39a62" stroke-width="1"/>
<rect x="560" y="86" width="1" height="36" fill="#f39a62"/>
<rect x="559.5" y="88.5" width="2" height="32" fill="#3a4049" stroke="#f39a62" stroke-width="1"/>
<rect x="564" y="105" width="1" height="26" fill="#f39a62"/>
<rect x="563.5" y="109.5" width="2" height="10" fill="#3a4049" stroke="#f39a62" stroke-width="1"/>
<rect x="567" y="109" width="1" height="6" fill="#f39a62"/>
<rect x="566" y="110" width="3" height="3" fill="#fa8038"/>
<rect x="570" y="111" width="1" height="5" fill="#f39a62"/>
<rect x="569.5" y="111.5" width="2" height="4" fill="#3a4049" stroke="#f39a62" stroke-width="1"/>
<rect x="574" y="106" width="1" height="19" fill="#f39a62"/>
<rect x="573" y="112" width="3" height="2" fill="#fa8038"/>
<rect x="577" y="105" width="1" height="14" fill="#f39a62"/>
<rect x="576.5" y="106.5" width="2" height="10" fill="#3a4049" stroke="#f39a62" stroke-width="1"/>
<rect x="580" y="94" width="1" height="23" fill="#f39a62"/>
<rect x="579" y="100" width="3" height="15" fill="#fa8038"/>
<rect x="584" y="77" width="1" height="24" fill="#f39a62"/>
<rect x="583" y="82" width="3" height="18" fill="#fa8038"/>
<rect x="587" y="74" width="1" height="10" fill="#f39a62"/>
<rect x="586" y="79" width="3" height="2" fill="#fa8038"/>
<rect x="590" y="70" width="1" height="10" fill="#f39a62"/>
<rect x="589" y="74" width="3" height="2" fill="#fa8038"/>
<rect x="594" y="68" width="1" height="18" fill="#f39a62"/>
<rect x="593" y="75" width="3" height="4" fill="#fa8038"/>
<rect x="597" y="73" width="1" height="21" fill="#f39a62"/>
<rect x="596.5" y="74.5" width="2" height="17" fill="#3a4049" stroke="#f39a62" stroke-width="1"/>
<rect x="601" y="90" width="1" height="33" fill="#f39a62"/>
<rect x="600.5" y="92.5" width="2" height="16" fill="#3a4049" stroke="#f39a62" stroke-width="1"/>
<rect x="604" y="103" width="1" height="9" fill="#f39a62"/>
<rect x="603.5" y="105.5" width="2" height="4" fill="#3a4049" stroke="#f39a62" stroke-width="1"/>
<rect x="607" y="105" width="1" height="8" fill="#f39a62"/>
<rect x="606" y="107" width="3" height="2" fill="#fa8038"/>
<rect x="611" y="103" width="1" height="5" fill="#f39a62"/>
<rect x="610" y="104" width="3" height="2" fill="#fa8038"/>
<rect x="614" y="95" width="1" height="18" fill="#f39a62"/>
<rect x="613.5" y="105.5" width="2" height="5" fill="#3a4049" stroke="#f39a62" stroke-width="1"/>
<rect x="617" y="109" width="1" height="14" fill="#f39a62"/>
<rect x="616.5" y="110.5" width="2" height="10" fill="#3a4049" stroke="#f39a62" stroke-width="1"/>
<rect x="621" y="115" width="1" height="18" fill="#f39a62"/>
<rect x="620.5" y="119.5" width="2" height="3" fill="#3a4049" stroke="#f39a62" stroke-width="1"/>
<rect x="624" y="117" width="1" height="6" fill="#f39a62"/>
<rect x="623" y="119" width="3" height="2" fill="#fa8038"/>
<rect x="627" y="116" width="1" height="4" fill="#f39a62"/>
<rect x="626" y="116" width="3" height="4" fill="#fa8038"/>
<rect x="631" y="109" width="1" height="16" fill="#f39a62"/>
<rect x="630" y="112" width="3" height="5" fill="#fa8038"/>
<rect x="634" y="111" width="1" height="8" fill="#f39a62"/>
<rect x="633.5" y="112.5" width="2" height="5" fill="#3a4049" stroke="#f39a62" stroke-width="1"/>
<rect x="637" y="108" width="1" height="21" fill="#f39a62"/>
<rect x="636.5" y="109.5" width="2" height="15" fill="#3a4049" stroke="#f39a62" stroke-width="1"/>
<rect x="641" y="121" width="1" height="20" fill="#f39a62"/>
<rect x="640.5" y="122.5" width="2" height="16" fill="#3a4049" stroke="#f39a62" stroke-width="1"/>
<rect x="644" y="133" width="1" height="6" fill="#f39a62"/>
<rect x="643.5" y="133.5" width="2" height="5" fill="#3a4049" stroke="#f39a62" stroke-width="1"/>
<rect x="647" y="129" width="1" height="8" fill="#f39a62"/>
<rect x="646" y="132" width="3" height="2" fill="#fa8038"/>
<rect x="651" y="129" width="1" height="6" fill="#f39a62"/>
<rect x="650" y="131" width="3" height="2" fill="#fa8038"/>
<rect x="654" y="124" width="1" height="11" fill="#f39a62"/>
<rect x="653" y="126" width="3" height="7" fill="#fa8038"/>
<rect x="657" y="110" width="1" height="23" fill="#f39a62"/>
<rect x="656" y="119" width="3" height="13" fill="#fa8038"/>
<rect x="661" y="120" width="1" height="30" fill="#f39a62"/>
<rect x="660.5" y="121.5" width="2" height="27" fill="#3a4049" stroke="#f39a62" stroke-width="1"/>
<rect x="664" y="137" width="1" height="13" fill="#f39a62"/>
<rect x="663.5" y="138.5" width="2" height="10" fill="#3a4049" stroke="#f39a62" stroke-width="1"/>
<rect x="667" y="142" width="1" height="5" fill="#f39a62"/>
<rect x="666" y="144" width="3" height="2" fill="#fa8038"/>
<rect x="671" y="133" width="1" height="12" fill="#f39a62"/>
<rect x="670" y="137" width="3" height="8" fill="#fa8038"/>
<rect x="674" y="124" width="1" height="17" fill="#f39a62"/>
<rect x="673" y="125" width="3" height="15" fill="#fa8038"/>
<rect x="677" y="125" width="1" height="5" fill="#f39a62"/>
<rect x="676" y="125" width="3" height="5" fill="#fa8038"/>
<rect x="681" y="103" width="1" height="24" fill="#f39a62"/>
<rect x="680" y="110" width="3" height="15" fill="#fa8038"/>
<rect x="684" y="106" width="1" height="4" fill="#f39a62"/>
<rect x="683" y="107" width="3" height="2" fill="#fa8038"/>
<rect x="687" y="101" width="1" height="11" fill="#f39a62"/>
<rect x="686" y="105" width="3" height="2" fill="#fa8038"/>
<rect x="691" y="103" width="1" height="9" fill="#f39a62"/>
<rect x="690" y="105" width="3" height="5" fill="#fa8038"/>
<rect x="694" y="88" width="1" height="22" fill="#f39a62"/>
<rect x="693" y="92" width="3" height="14" fill="#fa8038"/>
<rect x="697" y="76" width="1" height="24" fill="#f39a62"/>
<rect x="696" y="79" width="3" height="18" fill="#fa8038"/>
<rect x="701" y="70" width="1" height="20" fill="#f39a62"/>
<rect x="700.5" y="78.5" width="2" height="9" fill="#3a4049" stroke="#f39a62" stroke-width="1"/>
<rect x="704" y="82" width="1" height="8" fill="#f39a62"/>
<rect x="703.5" y="82.5" width="2" height="7" fill="#3a4049" stroke="#f39a62" stroke-width="1"/>
<rect x="707" y="84" width="1" height="6" fill="#f39a62"/>
<rect x="706" y="85" width="3" height="2" fill="#fa8038"/>
<rect x="711" y="80" width="1" height="8" fill="#f39a62"/>
<rect x="710" y="83" width="3" height="2" fill="#fa8038"/>
<rect x="714" y="80" width="1" height="23" fill="#f39a62"/>
<rect x="713.5" y="86.5" width="2" height="14" fill="#3a4049" stroke="#f39a62" stroke-width="1"/>
<rect x="717" y="92" width="1" height="10" fill="#f39a62"/>
<rect x="716.5" y="92.5" width="2" height="9" fill="#3a4049" stroke="#f39a62" stroke-width="1"/>
<rect x="721" y="100" width="1" height="16" fill="#f39a62"/>
<rect x="720.5" y="101.5" width="2" height="13" fill="#3a4049" stroke="#f39a62" stroke-width="1"/>
<rect x="724" y="103" width="1" height="7" fill="#f39a62"/>
<rect x="723.5" y="103.5" width="2" height="6" fill="#3a4049" stroke="#f39a62" stroke-width="1"/>
<rect x="727" y="109" width="1" height="7" fill="#f39a62"/>
<rect x="726" y="111" width="3" height="2" fill="#fa8038"/>
<rect x="731" y="109" width="1" height="10" fill="#f39a62"/>
<rect x="730" y="110" width="3" height="7" fill="#fa8038"/>
<rect x="734" y="111" width="1" height="12" fill="#f39a62"/>
<rect x="733.5" y="111.5" width="2" height="11" fill="#3a4049" stroke="#f39a62" stroke-width="1"/>
<rect x="737" y="114" width="1" height="27" fill="#f39a62"/>
<rect x="736.5" y="115.5" width="2" height="17" fill="#3a4049" stroke="#f39a62" stroke-width="1"/>
<rect x="741" y="121" width="1" height="14" fill="#f39a62"/>
<rect x="740.5" y="124.5" width="2" height="6" fill="#3a4049" stroke="#f39a62" stroke-width="1"/>
<rect x="744" y="123" width="1" height="12" fill="#f39a62"/>
<rect x="743.5" y="125.5" width="2" height="3" fill="#3a4049" stroke="#f39a62" stroke-width="1"/>
<rect x="751" y="121" width="1" height="12" fill="#f39a62"/>
<rect x="750" y="123" width="3" height="6" fill="#fa8038"/>
<rect x="754" y="118" width="1" height="15" fill="#f39a62"/>
<rect x="753.5" y="119.5" width="2" height="9" fill="#3a4049" stroke="#f39a62" stroke-width="1"/>
<rect x="757" y="120" width="1" height="18" fill="#f39a62"/>
<rect x="756.5" y="121.5" width="2" height="11" fill="#3a4049" stroke="#f39a62" stroke-width="1"/>
<rect x="761" y="124" width="1" height="5" fill="#f39a62"/>
<rect x="760.5" y="124.5" width="2" height="4" fill="#3a4049" stroke="#f39a62" stroke-width="1"/>
<rect x="764" y="123" width="1" height="6" fill="#f39a62"/>
<rect x="763" y="125" width="3" height="2" fill="#fa8038"/>
<rect x="768" y="124" width="1" height="4" fill="#f39a62"/>
<rect x="767" y="124" width="3" height="4" fill="#fa8038"/>
<rect x="771" y="120" width="1" height="4" fill="#f39a62"/>
<rect x="770" y="120" width="3" height="4" fill="#fa8038"/>
<rect x="774" y="106" width="1" height="13" fill="#f39a62"/>
<rect x="773" y="114" width="3" height="4" fill="#fa8038"/>
<rect x="778" y="97" width="1" height="18" fill="#f39a62"/>
<rect x="777" y="98" width="3" height="15" fill="#fa8038"/>
<rect x="781" y="97" width="1" height="28" fill="#f39a62"/>
<rect x="780.5" y="98.5" width="2" height="25" fill="#3a4049" stroke="#f39a62" stroke-width="1"/>
<rect x="784" y="117" width="1" height="10" fill="#f39a62"/>
<rect x="783.5" y="118.5" width="2" height="5" fill="#3a4049" stroke="#f39a62" stroke-width="1"/>
<rect x="788" y="112" width="1" height="6" fill="#f39a62"/>
<rect x="787" y="114" width="3" height="2" fill="#fa8038"/>
<rect x="791" y="114" width="1" height="4" fill="#f39a62"/>
<rect x="790.5" y="114.5" width="2" height="3" fill="#3a4049" stroke="#f39a62" stroke-width="1"/>
<rect x="794" y="116" width="1" height="15" fill="#f39a62"/>
<rect x="793.5" y="117.5" width="2" height="11" fill="#3a4049" stroke="#f39a62" stroke-width="1"/>
<rect x="798" y="126" width="1" height="15" fill="#f39a62"/>
<rect x="797.5" y="127.5" width="2" height="4" fill="#3a4049" stroke="#f39a62" stroke-width="1"/>
<rect x="801" y="108" width="1" height="25" fill="#f39a62"/>
<rect x="800" y="117" width="3" height="14" fill="#fa8038"/>
<rect x="804" y="112" width="1" height="7" fill="#f39a62"/>
<rect x="803" y="114" width="3" height="2" fill="#fa8038"/>
<rect x="808" y="118" width="1" height="5" fill="#f39a62"/>
<rect x="807" y="119" width="3" height="4" fill="#fa8038"/>
<rect x="811" y="119" width="1" height="11" fill="#f39a62"/>
<rect x="810.5" y="120.5" width="2" height="8" fill="#3a4049" stroke="#f39a62" stroke-width="1"/>
<rect x="814" y="121" width="1" height="9" fill="#f39a62"/>
<rect x="813.5" y="121.5" width="2" height="8" fill="#3a4049" stroke="#f39a62" stroke-width="1"/>
<rect x="818" y="107" width="1" height="36" fill="#f39a62"/>
<rect x="817.5" y="120.5" width="2" height="8" fill="#3a4049" stroke="#f39a62" stroke-width="1"/>
<rect x="821" y="102" width="1" height="27" fill="#f39a62"/>
<rect x="820" y="105" width="3" height="22" fill="#fa8038"/>
<rect x="824" y="105" width="1" height="11" fill="#f39a62"/>
<rect x="823.5" y="107.5" width="2" height="6" fill="#3a4049" stroke="#f39a62" stroke-width="1"/>
<rect x="828" y="109" width="1" height="6" fill="#f39a62"/>
<rect x="827" y="111" width="3" height="2" fill="#fa8038"/>
<rect x="831" y="108" width="1" height="4" fill="#f39a62"/>
<rect x="830" y="108" width="3" height="4" fill="#fa8038"/>
<rect x="834" y="92" width="1" height="17" fill="#f39a62"/>
<rect x="833" y="97" width="3" height="11" fill="#fa8038"/>
<rect x="838" y="92" width="1" height="34" fill="#f39a62"/>
<rect x="837.5" y="94.5" width="2" height="30" fill="#3a4049" stroke="#f39a62" stroke-width="1"/>
<rect x="841" y="120" width="1" height="5" fill="#f39a62"/>
<rect x="840.5" y="120.5" width="2" height="4" fill="#3a4049" stroke="#f39a62" stroke-width="1"/>
<rect x="844" y="120" width="1" height="2" fill="#f39a62"/>
<rect x="843" y="120" width="3" height="2" fill="#fa8038"/>
<rect x="851" y="115" width="1" height="10" fill="#f39a62"/>
<rect x="850.5" y="117.5" width="2" height="5" fill="#3a4049" stroke="#f39a62" stroke-width="1"/>
<rect x="854" y="120" width="1" height="3" fill="#f39a62"/>
<rect x="853" y="120" width="3" height="3" fill="#fa8038"/>
<rect x="858" y="118" width="1" height="9" fill="#f39a62"/>
<rect x="857" y="119" width="3" height="4" fill="#fa8038"/>
<rect x="861" y="112" width="1" height="9" fill="#f39a62"/>
<rect x="860" y="114" width="3" height="6" fill="#fa8038"/>
<rect x="864" y="109" width="1" height="9" fill="#f39a62"/>
<rect x="863" y="110" width="3" height="7" fill="#fa8038"/>
<rect x="868" y="105" width="1" height="12" fill="#f39a62"/>
<rect x="867" y="109" width="3" height="7" fill="#fa8038"/>
<rect x="871" y="94" width="1" height="16" fill="#f39a62"/>
<rect x="870" y="95" width="3" height="14" fill="#fa8038"/>
<polyline points="224.6,279.0 234.7,273.0 246.8,269.0 259.0,268.0 275.0,269.0 289.0,267.0 300.0,265.3 327.8,257.0 350.0,244.4 366.7,232.8 388.9,218.0 411.0,203.0 437.0,182.0 450.0,171.5 475.0,152.0 488.0,144.0 505.6,135.5 527.8,120.0 540.7,113.0 556.0,108.5 578.0,108.8 598.2,104.7 618.4,105.7 638.7,108.8 658.9,113.8 671.0,116.8 683.0,116.8 699.3,112.8 709.4,110.8 720.0,108.8 740.2,111.8 750.3,112.8 770.6,115.8 790.8,116.8 811.0,116.8 831.2,115.8 851.4,115.8 870.0,116.8" fill="none" stroke="#b02828" stroke-width="1.4"/>
<polyline points="203.0,279.0 214.0,269.0 226.6,260.0 238.7,252.0 246.8,251.0 252.0,253.0 263.0,257.0 275.0,261.0 283.0,262.0 290.0,261.0 299.4,256.0 307.5,252.0 316.7,250.0 333.3,240.3 347.2,225.0 366.7,204.0 383.3,191.7 405.6,173.6 422.2,157.0 436.0,148.0 450.0,126.4 466.7,112.5 476.4,107.7 488.9,104.0 494.6,104.0 504.8,98.6 516.9,87.5 529.0,80.4 540.0,76.4 547.2,80.4 555.3,81.5 561.4,86.5 569.5,92.6 578.0,95.6 586.0,93.6 594.2,90.5 604.3,93.6 618.4,100.7 628.6,104.7 638.7,108.8 648.8,114.8 658.9,118.9 667.0,125.0 675.0,125.0 683.0,123.0 691.2,118.9 699.3,111.8 709.4,105.7 717.5,104.7 724.0,104.7 732.0,106.7 740.2,110.8 750.3,115.8 760.4,117.9 770.6,117.9 780.7,115.8 790.8,117.9 800.9,119.9 811.0,120.9 819.0,121.9 829.2,117.9 837.3,114.8 845.4,115.8 857.5,117.9 870.0,117.9" fill="none" stroke="#1c1cd0" stroke-width="1.1"/>
</g>
<rect x="14" y="90" width="871" height="2" fill="#a82c2c"/>
<rect x="14" y="96" width="871" height="1" fill="#dedede"/>
<rect x="14" y="134" width="871" height="2" fill="#22a622"/>
<clipPath id="cmacd"><rect x="15" y="286" width="870" height="52"/></clipPath>
<g clip-path="url(#cmacd)">
<rect x="25" y="316.01" width="3" height="2.98" fill="#c41e1e" opacity="0.85"/>
<rect x="28" y="316.13" width="2" height="2.74" fill="#c41e1e" opacity="0.85"/>
<rect x="32" y="316.54" width="3" height="1.93" fill="#c41e1e" opacity="0.85"/>
<rect x="35" y="316.77" width="2" height="1.46" fill="#c41e1e" opacity="0.85"/>
<rect x="38" y="316.85" width="3" height="1.30" fill="#c41e1e" opacity="0.85"/>
<rect x="42" y="316.96" width="2" height="1.08" fill="#c41e1e" opacity="0.85"/>
<rect x="45" y="317.00" width="3" height="1.00" fill="#c41e1e" opacity="0.85"/>
<rect x="48" y="317.00" width="2" height="1.00" fill="#c41e1e" opacity="0.85"/>
<rect x="53" y="317" width="1" height="1" fill="#c02020" opacity="0.6"/>
<rect x="56" y="317" width="1" height="1" fill="#c02020" opacity="0.6"/>
<rect x="59" y="317" width="1" height="1" fill="#c02020" opacity="0.6"/>
<rect x="63" y="317" width="1" height="1" fill="#c02020" opacity="0.6"/>
<rect x="66" y="317" width="1" height="1" fill="#c02020" opacity="0.6"/>
<rect x="69" y="317" width="1" height="1" fill="#c02020" opacity="0.6"/>
<rect x="73" y="317" width="1" height="1" fill="#c02020" opacity="0.6"/>
<rect x="76" y="317" width="1" height="1" fill="#c02020" opacity="0.6"/>
<rect x="79" y="317" width="1" height="1" fill="#c02020" opacity="0.6"/>
<rect x="83" y="317" width="1" height="1" fill="#c02020" opacity="0.6"/>
<rect x="86" y="317" width="1" height="1" fill="#c02020" opacity="0.6"/>
<rect x="90" y="317" width="1" height="1" fill="#c02020" opacity="0.6"/>
<rect x="93" y="317" width="1" height="1" fill="#c02020" opacity="0.6"/>
<rect x="96" y="317" width="1" height="1" fill="#c02020" opacity="0.6"/>
<rect x="100" y="317" width="1" height="1" fill="#c02020" opacity="0.6"/>
<rect x="103" y="317" width="1" height="1" fill="#c02020" opacity="0.6"/>
<rect x="106" y="317" width="1" height="1" fill="#c02020" opacity="0.6"/>
<rect x="110" y="317" width="1" height="1" fill="#c02020" opacity="0.6"/>
<rect x="113" y="317" width="1" height="1" fill="#c02020" opacity="0.6"/>
<rect x="116" y="317" width="1" height="1" fill="#c02020" opacity="0.6"/>
<rect x="120" y="317" width="1" height="1" fill="#c02020" opacity="0.6"/>
<rect x="123" y="317" width="1" height="1" fill="#c02020" opacity="0.6"/>
<rect x="126" y="317" width="1" height="1" fill="#c02020" opacity="0.6"/>
<rect x="130" y="317" width="1" height="1" fill="#c02020" opacity="0.6"/>
<rect x="133" y="317" width="1" height="1" fill="#c02020" opacity="0.6"/>
<rect x="136" y="317" width="1" height="1" fill="#c02020" opacity="0.6"/>
<rect x="140" y="317" width="1" height="1" fill="#c02020" opacity="0.6"/>
<rect x="143" y="317" width="1" height="1" fill="#c02020" opacity="0.6"/>
<rect x="146" y="317" width="1" height="1" fill="#c02020" opacity="0.6"/>
<rect x="150" y="317" width="1" height="1" fill="#c02020" opacity="0.6"/>
<rect x="153" y="317" width="1" height="1" fill="#c02020" opacity="0.6"/>
<rect x="156" y="317" width="1" height="1" fill="#c02020" opacity="0.6"/>
<rect x="160" y="317" width="1" height="1" fill="#c02020" opacity="0.6"/>
<rect x="163" y="317" width="1" height="1" fill="#c02020" opacity="0.6"/>
<rect x="166" y="317" width="1" height="1" fill="#c02020" opacity="0.6"/>
<rect x="170" y="317" width="1" height="1" fill="#c02020" opacity="0.6"/>
<rect x="173" y="317" width="1" height="1" fill="#c02020" opacity="0.6"/>
<rect x="176" y="317" width="1" height="1" fill="#c02020" opacity="0.6"/>
<rect x="180" y="317" width="1" height="1" fill="#c02020" opacity="0.6"/>
<rect x="182" y="317.00" width="2" height="1.00" fill="#c41e1e" opacity="0.85"/>
<rect x="185" y="317.00" width="3" height="1.00" fill="#c41e1e" opacity="0.85"/>
<rect x="189" y="316.82" width="2" height="1.36" fill="#c41e1e" opacity="0.85"/>
<rect x="192" y="316.75" width="3" height="1.49" fill="#c41e1e" opacity="0.85"/>
<rect x="195" y="316.72" width="2" height="1.55" fill="#c41e1e" opacity="0.85"/>
<rect x="199" y="316.69" width="3" height="1.61" fill="#c41e1e" opacity="0.85"/>
<rect x="202" y="316.68" width="2" height="1.63" fill="#c41e1e" opacity="0.85"/>
<rect x="205" y="316.67" width="3" height="1.65" fill="#c41e1e" opacity="0.85"/>
<rect x="209" y="316.66" width="2" height="1.68" fill="#c41e1e" opacity="0.85"/>
<rect x="212" y="316.66" width="3" height="1.67" fill="#c41e1e" opacity="0.85"/>
<rect x="215" y="316.68" width="2" height="1.64" fill="#c41e1e" opacity="0.85"/>
<rect x="219" y="316.70" width="3" height="1.59" fill="#c41e1e" opacity="0.85"/>
<rect x="222" y="316.72" width="2" height="1.56" fill="#c41e1e" opacity="0.85"/>
<rect x="225" y="316.74" width="3" height="1.52" fill="#c41e1e" opacity="0.85"/>
<rect x="229" y="316.76" width="2" height="1.48" fill="#c41e1e" opacity="0.85"/>
<rect x="232" y="316.78" width="3" height="1.44" fill="#c41e1e" opacity="0.85"/>
<rect x="235" y="316.80" width="2" height="1.41" fill="#c41e1e" opacity="0.85"/>
<rect x="239" y="317.00" width="3" height="1.00" fill="#c41e1e" opacity="0.85"/>
<rect x="242" y="317.00" width="2" height="1.00" fill="#c41e1e" opacity="0.85"/>
<rect x="246" y="317" width="1" height="1" fill="#c02020" opacity="0.6"/>
<rect x="250" y="317" width="1" height="1" fill="#c02020" opacity="0.6"/>
<rect x="252" y="317.00" width="3" height="1.00" fill="#c41e1e" opacity="0.85"/>
<rect x="256" y="316.94" width="2" height="1.13" fill="#c41e1e" opacity="0.85"/>
<rect x="259" y="316.75" width="3" height="1.50" fill="#c41e1e" opacity="0.85"/>
<rect x="262" y="316.68" width="2" height="1.64" fill="#c41e1e" opacity="0.85"/>
<rect x="266" y="316.89" width="3" height="1.21" fill="#c41e1e" opacity="0.85"/>
<rect x="269" y="317.00" width="2" height="1.00" fill="#c41e1e" opacity="0.85"/>
<rect x="272" y="317.00" width="3" height="1.00" fill="#c41e1e" opacity="0.85"/>
<rect x="277" y="317" width="1" height="1" fill="#c02020" opacity="0.6"/>
<rect x="280" y="317" width="1" height="1" fill="#c02020" opacity="0.6"/>
<rect x="282" y="317.00" width="2" height="1.00" fill="#c41e1e" opacity="0.85"/>
<rect x="286" y="317.00" width="3" height="1.00" fill="#c41e1e" opacity="0.85"/>
<rect x="289" y="316.87" width="2" height="1.26" fill="#c41e1e" opacity="0.85"/>
<rect x="292" y="316.90" width="3" height="1.20" fill="#c41e1e" opacity="0.85"/>
<rect x="296" y="316.94" width="2" height="1.12" fill="#c41e1e" opacity="0.85"/>
<rect x="299" y="316.97" width="3" height="1.06" fill="#c41e1e" opacity="0.85"/>
<rect x="302" y="317.00" width="2" height="1.00" fill="#c41e1e" opacity="0.85"/>
<rect x="306" y="317.00" width="3" height="1.00" fill="#c41e1e" opacity="0.85"/>
<rect x="309" y="317.00" width="2" height="1.00" fill="#c41e1e" opacity="0.85"/>
<rect x="312" y="317.00" width="3" height="1.00" fill="#c41e1e" opacity="0.85"/>
<rect x="316" y="317.00" width="2" height="1.00" fill="#c41e1e" opacity="0.85"/>
<rect x="319" y="317.00" width="3" height="1.00" fill="#c41e1e" opacity="0.85"/>
<rect x="322" y="317.00" width="2" height="1.00" fill="#c41e1e" opacity="0.85"/>
<rect x="326" y="316.96" width="3" height="1.08" fill="#c41e1e" opacity="0.85"/>
<rect x="329" y="316.89" width="2" height="1.23" fill="#c41e1e" opacity="0.85"/>
<rect x="332" y="316.89" width="3" height="1.23" fill="#c41e1e" opacity="0.85"/>
<rect x="336" y="316.88" width="2" height="1.23" fill="#c41e1e" opacity="0.85"/>
<rect x="339" y="316.88" width="3" height="1.24" fill="#c41e1e" opacity="0.85"/>
<rect x="342" y="316.85" width="2" height="1.29" fill="#c41e1e" opacity="0.85"/>
<rect x="346" y="316.74" width="3" height="1.51" fill="#c41e1e" opacity="0.85"/>
<rect x="349" y="316.66" width="2" height="1.67" fill="#c41e1e" opacity="0.85"/>
<rect x="352" y="316.58" width="3" height="1.84" fill="#c41e1e" opacity="0.85"/>
<rect x="356" y="316.47" width="2" height="2.06" fill="#c41e1e" opacity="0.85"/>
<rect x="359" y="316.49" width="3" height="2.02" fill="#c41e1e" opacity="0.85"/>
<rect x="362" y="316.54" width="2" height="1.92" fill="#c41e1e" opacity="0.85"/>
<rect x="366" y="316.61" width="3" height="1.78" fill="#c41e1e" opacity="0.85"/>
<rect x="369" y="316.65" width="2" height="1.70" fill="#c41e1e" opacity="0.85"/>
<rect x="372" y="316.69" width="3" height="1.62" fill="#c41e1e" opacity="0.85"/>
<rect x="376" y="316.75" width="2" height="1.51" fill="#c41e1e" opacity="0.85"/>
<rect x="379" y="316.79" width="3" height="1.43" fill="#c41e1e" opacity="0.85"/>
<rect x="382" y="316.83" width="2" height="1.35" fill="#c41e1e" opacity="0.85"/>
<rect x="386" y="316.88" width="3" height="1.24" fill="#c41e1e" opacity="0.85"/>
<rect x="389" y="316.92" width="2" height="1.16" fill="#c41e1e" opacity="0.85"/>
<rect x="392" y="316.96" width="3" height="1.08" fill="#c41e1e" opacity="0.85"/>
<rect x="396" y="316.95" width="2" height="1.10" fill="#c41e1e" opacity="0.85"/>
<rect x="399" y="316.93" width="3" height="1.15" fill="#c41e1e" opacity="0.85"/>
<rect x="402" y="316.90" width="2" height="1.20" fill="#c41e1e" opacity="0.85"/>
<rect x="406" y="316.87" width="3" height="1.26" fill="#c41e1e" opacity="0.85"/>
<rect x="409" y="316.85" width="2" height="1.31" fill="#c41e1e" opacity="0.85"/>
<rect x="412" y="316.86" width="3" height="1.28" fill="#c41e1e" opacity="0.85"/>
<rect x="416" y="316.98" width="2" height="1.04" fill="#c41e1e" opacity="0.85"/>
<rect x="419" y="317.00" width="3" height="1.00" fill="#c41e1e" opacity="0.85"/>
<rect x="423" y="317.00" width="2" height="1.00" fill="#c41e1e" opacity="0.85"/>
<rect x="426" y="317.00" width="3" height="1.00" fill="#c41e1e" opacity="0.85"/>
<rect x="430" y="317" width="1" height="1" fill="#c02020" opacity="0.6"/>
<rect x="434" y="317" width="1" height="1" fill="#c02020" opacity="0.6"/>
<rect x="437" y="317" width="1" height="1" fill="#c02020" opacity="0.6"/>
<rect x="439" y="317.00" width="3" height="1.00" fill="#c41e1e" opacity="0.85"/>
<rect x="443" y="316.91" width="2" height="1.17" fill="#c41e1e" opacity="0.85"/>
<rect x="446" y="316.67" width="3" height="1.66" fill="#c41e1e" opacity="0.85"/>
<rect x="449" y="316.43" width="2" height="2.14" fill="#c41e1e" opacity="0.85"/>
<rect x="453" y="316.44" width="3" height="2.12" fill="#c41e1e" opacity="0.85"/>
<rect x="456" y="316.60" width="2" height="1.80" fill="#c41e1e" opacity="0.85"/>
<rect x="459" y="316.76" width="3" height="1.49" fill="#c41e1e" opacity="0.85"/>
<rect x="463" y="317.00" width="2" height="1.00" fill="#c41e1e" opacity="0.85"/>
<rect x="467" y="317" width="1" height="1" fill="#c02020" opacity="0.6"/>
<rect x="470" y="317" width="1" height="1" fill="#c02020" opacity="0.6"/>
<rect x="473" y="317.00" width="3" height="1.00" fill="#c41e1e" opacity="0.85"/>
<rect x="476" y="317.00" width="2" height="1.00" fill="#c41e1e" opacity="0.85"/>
<rect x="479" y="317.00" width="3" height="1.00" fill="#c41e1e" opacity="0.85"/>
<rect x="483" y="317.00" width="2" height="1.00" fill="#c41e1e" opacity="0.85"/>
<rect x="486" y="317.00" width="3" height="1.00" fill="#c41e1e" opacity="0.85"/>
<rect x="489" y="317.00" width="2" height="1.00" fill="#c41e1e" opacity="0.85"/>
<rect x="493" y="317.00" width="3" height="1.01" fill="#c41e1e" opacity="0.85"/>
<rect x="496" y="316.98" width="2" height="1.04" fill="#c41e1e" opacity="0.85"/>
<rect x="499" y="317.00" width="3" height="1.00" fill="#c41e1e" opacity="0.85"/>
<rect x="503" y="317.00" width="2" height="1.00" fill="#c41e1e" opacity="0.85"/>
<rect x="506" y="317.00" width="3" height="1.00" fill="#c41e1e" opacity="0.85"/>
<rect x="509" y="317.00" width="2" height="1.00" fill="#c41e1e" opacity="0.85"/>
<rect x="513" y="317.00" width="3" height="1.00" fill="#c41e1e" opacity="0.85"/>
<rect x="516" y="317.00" width="2" height="1.00" fill="#c41e1e" opacity="0.85"/>
<rect x="519" y="317.00" width="3" height="1.00" fill="#c41e1e" opacity="0.85"/>
<rect x="524" y="317" width="1" height="1" fill="#c02020" opacity="0.6"/>
<rect x="527" y="317" width="1" height="1" fill="#c02020" opacity="0.6"/>
<rect x="530" y="317" width="1" height="1" fill="#c02020" opacity="0.6"/>
<rect x="534" y="317" width="1" height="1" fill="#c02020" opacity="0.6"/>
<rect x="537" y="317" width="1" height="1" fill="#c02020" opacity="0.6"/>
<rect x="540" y="317" width="1" height="1" fill="#c02020" opacity="0.6"/>
<rect x="543" y="317.00" width="2" height="1.00" fill="#c41e1e" opacity="0.85"/>
<rect x="546" y="317.00" width="3" height="1.00" fill="#c41e1e" opacity="0.85"/>
<rect x="549" y="317.00" width="2" height="1.00" fill="#c41e1e" opacity="0.85"/>
<rect x="553" y="316.80" width="3" height="1.41" fill="#c41e1e" opacity="0.85"/>
<rect x="556" y="316.63" width="2" height="1.74" fill="#c41e1e" opacity="0.85"/>
<rect x="559" y="316.46" width="3" height="2.08" fill="#c41e1e" opacity="0.85"/>
<rect x="563" y="316.25" width="2" height="2.50" fill="#c41e1e" opacity="0.85"/>
<rect x="566" y="316.15" width="3" height="2.70" fill="#c41e1e" opacity="0.85"/>
<rect x="569" y="316.12" width="2" height="2.77" fill="#c41e1e" opacity="0.85"/>
<rect x="573" y="316.07" width="3" height="2.86" fill="#c41e1e" opacity="0.85"/>
<rect x="576" y="316.12" width="2" height="2.75" fill="#c41e1e" opacity="0.85"/>
<rect x="579" y="316.59" width="3" height="1.82" fill="#c41e1e" opacity="0.85"/>
<rect x="583" y="316.69" width="2" height="1.62" fill="#c41e1e" opacity="0.85"/>
<rect x="586" y="316.77" width="3" height="1.47" fill="#c41e1e" opacity="0.85"/>
<rect x="589" y="316.84" width="2" height="1.32" fill="#c41e1e" opacity="0.85"/>
<rect x="593" y="316.94" width="3" height="1.11" fill="#c41e1e" opacity="0.85"/>
<rect x="596" y="317.00" width="2" height="1.00" fill="#c41e1e" opacity="0.85"/>
<rect x="600" y="317.00" width="3" height="1.00" fill="#c41e1e" opacity="0.85"/>
<rect x="603" y="317.00" width="2" height="1.00" fill="#c41e1e" opacity="0.85"/>
<rect x="606" y="317.00" width="3" height="1.00" fill="#c41e1e" opacity="0.85"/>
<rect x="610" y="316.97" width="2" height="1.05" fill="#c41e1e" opacity="0.85"/>
<rect x="613" y="316.93" width="3" height="1.14" fill="#c41e1e" opacity="0.85"/>
<rect x="616" y="316.89" width="2" height="1.22" fill="#c41e1e" opacity="0.85"/>
<rect x="620" y="316.85" width="3" height="1.29" fill="#c41e1e" opacity="0.85"/>
<rect x="623" y="316.84" width="2" height="1.31" fill="#c41e1e" opacity="0.85"/>
<rect x="626" y="316.83" width="3" height="1.33" fill="#c41e1e" opacity="0.85"/>
<rect x="630" y="316.82" width="2" height="1.36" fill="#c41e1e" opacity="0.85"/>
<rect x="633" y="316.81" width="3" height="1.39" fill="#c41e1e" opacity="0.85"/>
<rect x="636" y="316.79" width="2" height="1.42" fill="#c41e1e" opacity="0.85"/>
<rect x="640" y="316.77" width="3" height="1.46" fill="#c41e1e" opacity="0.85"/>
<rect x="643" y="316.76" width="2" height="1.49" fill="#c41e1e" opacity="0.85"/>
<rect x="646" y="316.76" width="3" height="1.48" fill="#c41e1e" opacity="0.85"/>
<rect x="650" y="316.78" width="2" height="1.45" fill="#c41e1e" opacity="0.85"/>
<rect x="653" y="316.79" width="3" height="1.43" fill="#c41e1e" opacity="0.85"/>
<rect x="656" y="316.80" width="2" height="1.40" fill="#c41e1e" opacity="0.85"/>
<rect x="660" y="316.82" width="3" height="1.37" fill="#c41e1e" opacity="0.85"/>
<rect x="663" y="316.83" width="2" height="1.35" fill="#c41e1e" opacity="0.85"/>
<rect x="666" y="316.84" width="3" height="1.33" fill="#c41e1e" opacity="0.85"/>
<rect x="670" y="316.84" width="2" height="1.33" fill="#c41e1e" opacity="0.85"/>
<rect x="673" y="316.84" width="3" height="1.33" fill="#c41e1e" opacity="0.85"/>
<rect x="676" y="316.84" width="2" height="1.33" fill="#c41e1e" opacity="0.85"/>
<rect x="680" y="316.97" width="3" height="1.06" fill="#c41e1e" opacity="0.85"/>
<rect x="683" y="317.00" width="2" height="1.00" fill="#c41e1e" opacity="0.85"/>
<rect x="687" y="317" width="1" height="1" fill="#c02020" opacity="0.6"/>
<rect x="691" y="317" width="1" height="1" fill="#c02020" opacity="0.6"/>
<rect x="693" y="317.00" width="3" height="1.00" fill="#c41e1e" opacity="0.85"/>
<rect x="696" y="317.00" width="2" height="1.00" fill="#c41e1e" opacity="0.85"/>
<rect x="700" y="316.97" width="3" height="1.07" fill="#c41e1e" opacity="0.85"/>
<rect x="703" y="316.83" width="2" height="1.34" fill="#c41e1e" opacity="0.85"/>
<rect x="706" y="316.70" width="3" height="1.60" fill="#c41e1e" opacity="0.85"/>
<rect x="710" y="316.87" width="2" height="1.26" fill="#c41e1e" opacity="0.85"/>
<rect x="713" y="316.98" width="3" height="1.03" fill="#c41e1e" opacity="0.85"/>
<rect x="716" y="317.00" width="2" height="1.00" fill="#c41e1e" opacity="0.85"/>
<rect x="720" y="317.00" width="3" height="1.00" fill="#c41e1e" opacity="0.85"/>
<rect x="724" y="317" width="1" height="1" fill="#c02020" opacity="0.6"/>
<rect x="726" y="317.00" width="3" height="1.00" fill="#c41e1e" opacity="0.85"/>
<rect x="730" y="317.00" width="2" height="1.00" fill="#c41e1e" opacity="0.85"/>
<rect x="733" y="317.00" width="3" height="1.00" fill="#c41e1e" opacity="0.85"/>
<rect x="736" y="317.00" width="2" height="1.00" fill="#c41e1e" opacity="0.85"/>
<rect x="740" y="317.00" width="3" height="1.00" fill="#c41e1e" opacity="0.85"/>
<rect x="743" y="316.96" width="2" height="1.08" fill="#c41e1e" opacity="0.85"/>
<rect x="746" y="316.90" width="3" height="1.20" fill="#c41e1e" opacity="0.85"/>
<rect x="750" y="316.77" width="2" height="1.45" fill="#c41e1e" opacity="0.85"/>
<rect x="753" y="316.68" width="3" height="1.64" fill="#c41e1e" opacity="0.85"/>
<rect x="756" y="316.58" width="2" height="1.83" fill="#c41e1e" opacity="0.85"/>
<rect x="760" y="316.46" width="3" height="2.09" fill="#c41e1e" opacity="0.85"/>
<rect x="763" y="316.51" width="2" height="1.98" fill="#c41e1e" opacity="0.85"/>
<rect x="767" y="316.68" width="3" height="1.64" fill="#c41e1e" opacity="0.85"/>
<rect x="770" y="316.81" width="2" height="1.39" fill="#c41e1e" opacity="0.85"/>
<rect x="773" y="316.93" width="3" height="1.14" fill="#c41e1e" opacity="0.85"/>
<rect x="777" y="317.00" width="2" height="1.00" fill="#c41e1e" opacity="0.85"/>
<rect x="780" y="317.00" width="3" height="1.00" fill="#c41e1e" opacity="0.85"/>
<rect x="784" y="317" width="1" height="1" fill="#c02020" opacity="0.6"/>
<rect x="788" y="317" width="1" height="1" fill="#c02020" opacity="0.6"/>
<rect x="791" y="317" width="1" height="1" fill="#c02020" opacity="0.6"/>
<rect x="794" y="317" width="1" height="1" fill="#c02020" opacity="0.6"/>
<rect x="797" y="317.00" width="2" height="1.00" fill="#c41e1e" opacity="0.85"/>
<rect x="800" y="317.00" width="3" height="1.00" fill="#c41e1e" opacity="0.85"/>
<rect x="803" y="317.00" width="2" height="1.00" fill="#c41e1e" opacity="0.85"/>
<rect x="807" y="317.00" width="3" height="1.00" fill="#c41e1e" opacity="0.85"/>
<rect x="810" y="317.00" width="2" height="1.00" fill="#c41e1e" opacity="0.85"/>
<rect x="813" y="316.98" width="3" height="1.05" fill="#c41e1e" opacity="0.85"/>
<rect x="817" y="316.93" width="2" height="1.13" fill="#c41e1e" opacity="0.85"/>
<rect x="820" y="316.90" width="3" height="1.20" fill="#c41e1e" opacity="0.85"/>
<rect x="823" y="316.87" width="2" height="1.26" fill="#c41e1e" opacity="0.85"/>
<rect x="827" y="316.84" width="3" height="1.33" fill="#c41e1e" opacity="0.85"/>
<rect x="830" y="316.82" width="2" height="1.36" fill="#c41e1e" opacity="0.85"/>
<rect x="833" y="316.81" width="3" height="1.39" fill="#c41e1e" opacity="0.85"/>
<rect x="837" y="316.79" width="2" height="1.42" fill="#c41e1e" opacity="0.85"/>
<rect x="840" y="316.77" width="3" height="1.45" fill="#c41e1e" opacity="0.85"/>
<rect x="843" y="316.76" width="2" height="1.48" fill="#c41e1e" opacity="0.85"/>
<rect x="847" y="316.74" width="3" height="1.52" fill="#c41e1e" opacity="0.85"/>
<rect x="850" y="316.73" width="2" height="1.55" fill="#c41e1e" opacity="0.85"/>
<rect x="853" y="316.71" width="3" height="1.58" fill="#c41e1e" opacity="0.85"/>
<rect x="857" y="316.69" width="2" height="1.62" fill="#c41e1e" opacity="0.85"/>
<rect x="860" y="316.67" width="3" height="1.66" fill="#c41e1e" opacity="0.85"/>
<rect x="863" y="316.65" width="2" height="1.69" fill="#c41e1e" opacity="0.85"/>
<rect x="867" y="316.63" width="3" height="1.74" fill="#c41e1e" opacity="0.85"/>
<rect x="870" y="316.62" width="2" height="1.75" fill="#c41e1e" opacity="0.85"/>
<polyline points="15.0,317.8 27.6,322.3 50.0,322.8 83.0,321.6 111.0,319.8 143.5,320.3 176.0,319.8 191.0,314.8 211.5,310.2 236.7,305.2 262.0,309.7 290.0,312.7 321.0,310.0 342.0,305.4 357.7,300.8 368.0,299.0 394.0,297.0 412.0,294.5 436.0,293.7 451.5,288.5 462.0,289.0 477.5,292.4 498.0,294.5 537.0,294.5 550.0,299.0 566.0,305.4 576.5,308.6 580.0,308.0 600.8,308.6 619.0,313.0 645.0,318.5 666.0,322.4 679.0,322.4 689.0,320.5 707.6,314.5 720.6,314.5 736.0,316.4 762.0,320.5 775.0,319.8 788.0,318.5 827.0,317.0 853.4,316.4 869.0,316.0" fill="none" stroke="#c42a2a" stroke-width="1.7"/>
<polyline points="15.0,314.0 35.0,320.3 60.0,322.8 111.0,320.3 173.7,320.3 199.0,315.3 236.7,307.2 262.0,307.2 290.0,314.5 329.0,310.0 368.0,301.5 407.0,297.0 441.0,293.0 467.0,290.3 498.0,293.0 537.0,294.5 563.0,300.8 580.0,305.4 600.8,307.5 632.0,313.8 666.0,320.5 689.0,320.5 710.0,316.4 728.0,314.5 746.7,316.4 778.0,318.5 814.4,319.0 869.0,318.5" fill="none" stroke="#1f7f1f" stroke-width="1.7" opacity="0.9"/>
</g>
<rect x="15" y="286" width="31" height="13" fill="#3a4049"/>
<text x="16.5" y="298" font-size="11.5" fill="#c42828" textLength="28.5" lengthAdjust="spacingAndGlyphs">MACD</text>
<rect x="15" y="356" width="856" height="2" fill="#10109a"/>
<rect x="15" y="396" width="856" height="2" fill="#10109a"/>
<clipPath id="crsi"><rect x="15" y="345" width="870" height="55"/></clipPath>
<g clip-path="url(#crsi)">
<polyline points="15.0,380.0 42.0,379.0 46.6,375.2 52.0,379.0 55.0,379.0 59.1,375.2 63.0,379.0 65.0,378.0 68.2,375.2 72.0,380.0 77.9,386.4 86.2,391.9 93.2,380.1 96.6,368.3 102.9,372.5 107.0,369.7 114.0,375.2 116.8,364.6 120.9,380.8 126.5,381.5 133.4,383.6 139.0,389.1 143.9,382.2 151.5,381.5 156.4,373.9 160.5,381.5 164.0,377.3 168.2,378.0 170.9,376.6 173.5,380.4 176.2,373.9 179.7,360.0 183.2,357.2 186.7,357.2 190.8,360.7 194.3,354.4 197.1,355.1 203.3,363.4 207.5,359.6 213.0,358.6 217.2,354.4 223.5,353.4 227.0,357.9 230.4,361.4 235.3,357.2 236.7,355.1 240.1,368.3 245.0,371.1 247.8,373.2 253.3,382.9 260.3,385.7 264.4,380.4 271.4,385.4 277.6,380.4 281.1,383.6 286.7,377.3 290.8,372.5 293.6,364.1 299.2,360.7 303.3,359.6 310.3,369.0 313.0,369.0 317.2,359.3 320.7,368.3 322.8,362.0 327.6,359.3 333.2,366.2 337.4,362.0 340.8,353.7 345.0,355.1 348.5,354.4 353.3,350.2 356.8,349.3 360.3,358.6 363.0,357.9 365.8,357.2 371.4,354.4 374.9,357.2 376.9,363.4 382.5,359.3 386.0,360.4 389.4,362.0 393.6,355.1 399.2,357.2 403.3,357.9 407.5,355.1 412.4,352.3 417.2,358.6 421.4,353.7 425.6,354.4 429.7,357.9 435.3,362.0 439.4,350.9 442.2,346.5 446.4,347.0 449.9,347.0 453.2,348.9 454.7,351.6 457.4,360.7 460.8,364.1 465.0,366.2 467.8,363.4 470.6,365.5 474.0,363.4 480.3,366.2 487.2,363.4 494.9,376.6 501.1,361.4 503.9,362.0 510.8,361.4 515.0,357.2 517.1,357.9 520.6,364.1 527.5,359.3 530.3,368.3 534.4,362.0 538.6,369.7 541.4,370.4 547.0,382.2 549.7,382.9 554.6,376.6 560.8,389.1 564.3,384.3 567.8,385.7 573.3,383.6 577.5,385.0 584.4,372.5 590.0,371.1 594.2,370.4 600.0,381.5 604.2,383.2 610.4,382.2 613.2,383.6 618.0,388.4 621.5,389.1 625.0,385.0 627.8,386.4 632.0,382.2 636.1,385.7 641.7,394.0 645.8,391.2 654.2,387.0 657.0,380.4 663.9,393.3 673.6,380.1 676.4,380.1 681.2,371.8 687.5,370.4 691.7,371.8 697.2,359.6 701.4,365.5 708.3,364.6 712.5,366.9 717.4,376.0 721.5,375.7 725.0,380.8 730.6,380.8 737.5,389.1 741.7,384.6 747.2,387.8 751.4,385.0 754.9,380.4 759.7,384.3 761.5,381.5 765.0,384.3 769.2,380.4 773.3,376.0 777.5,366.2 781.7,380.1 784.4,376.6 787.9,378.0 792.0,378.7 795.6,382.9 798.3,384.3 801.8,376.6 805.3,377.3 809.4,378.7 815.7,377.3 821.2,371.0 824.7,373.9 828.9,373.9 834.4,365.5 839.3,376.6 845.0,380.0 855.0,380.0 862.2,376.6 867.8,371.8 871.2,366.2" fill="none" stroke="#f08a30" stroke-width="1"/>
<clipPath id="cover"><rect x="15" y="340" width="870" height="17"/></clipPath>
<polyline points="15.0,380.0 42.0,379.0 46.6,375.2 52.0,379.0 55.0,379.0 59.1,375.2 63.0,379.0 65.0,378.0 68.2,375.2 72.0,380.0 77.9,386.4 86.2,391.9 93.2,380.1 96.6,368.3 102.9,372.5 107.0,369.7 114.0,375.2 116.8,364.6 120.9,380.8 126.5,381.5 133.4,383.6 139.0,389.1 143.9,382.2 151.5,381.5 156.4,373.9 160.5,381.5 164.0,377.3 168.2,378.0 170.9,376.6 173.5,380.4 176.2,373.9 179.7,360.0 183.2,357.2 186.7,357.2 190.8,360.7 194.3,354.4 197.1,355.1 203.3,363.4 207.5,359.6 213.0,358.6 217.2,354.4 223.5,353.4 227.0,357.9 230.4,361.4 235.3,357.2 236.7,355.1 240.1,368.3 245.0,371.1 247.8,373.2 253.3,382.9 260.3,385.7 264.4,380.4 271.4,385.4 277.6,380.4 281.1,383.6 286.7,377.3 290.8,372.5 293.6,364.1 299.2,360.7 303.3,359.6 310.3,369.0 313.0,369.0 317.2,359.3 320.7,368.3 322.8,362.0 327.6,359.3 333.2,366.2 337.4,362.0 340.8,353.7 345.0,355.1 348.5,354.4 353.3,350.2 356.8,349.3 360.3,358.6 363.0,357.9 365.8,357.2 371.4,354.4 374.9,357.2 376.9,363.4 382.5,359.3 386.0,360.4 389.4,362.0 393.6,355.1 399.2,357.2 403.3,357.9 407.5,355.1 412.4,352.3 417.2,358.6 421.4,353.7 425.6,354.4 429.7,357.9 435.3,362.0 439.4,350.9 442.2,346.5 446.4,347.0 449.9,347.0 453.2,348.9 454.7,351.6 457.4,360.7 460.8,364.1 465.0,366.2 467.8,363.4 470.6,365.5 474.0,363.4 480.3,366.2 487.2,363.4 494.9,376.6 501.1,361.4 503.9,362.0 510.8,361.4 515.0,357.2 517.1,357.9 520.6,364.1 527.5,359.3 530.3,368.3 534.4,362.0 538.6,369.7 541.4,370.4 547.0,382.2 549.7,382.9 554.6,376.6 560.8,389.1 564.3,384.3 567.8,385.7 573.3,383.6 577.5,385.0 584.4,372.5 590.0,371.1 594.2,370.4 600.0,381.5 604.2,383.2 610.4,382.2 613.2,383.6 618.0,388.4 621.5,389.1 625.0,385.0 627.8,386.4 632.0,382.2 636.1,385.7 641.7,394.0 645.8,391.2 654.2,387.0 657.0,380.4 663.9,393.3 673.6,380.1 676.4,380.1 681.2,371.8 687.5,370.4 691.7,371.8 697.2,359.6 701.4,365.5 708.3,364.6 712.5,366.9 717.4,376.0 721.5,375.7 725.0,380.8 730.6,380.8 737.5,389.1 741.7,384.6 747.2,387.8 751.4,385.0 754.9,380.4 759.7,384.3 761.5,381.5 765.0,384.3 769.2,380.4 773.3,376.0 777.5,366.2 781.7,380.1 784.4,376.6 787.9,378.0 792.0,378.7 795.6,382.9 798.3,384.3 801.8,376.6 805.3,377.3 809.4,378.7 815.7,377.3 821.2,371.0 824.7,373.9 828.9,373.9 834.4,365.5 839.3,376.6 845.0,380.0 855.0,380.0 862.2,376.6 867.8,371.8 871.2,366.2" fill="none" stroke="#d030e0" stroke-width="1" clip-path="url(#cover)"/>
</g>
<rect x="15" y="345" width="16.5" height="14" fill="#3a4049"/>
<text x="15.5" y="356.5" font-size="11.5" fill="#f08a30" textLength="16" lengthAdjust="spacingAndGlyphs">RSI</text>
<rect x="14.5" y="40.5" width="871" height="239" fill="none" stroke="#a8b8c8" stroke-width="1"/>
<path d="M15.5 279 V41.5 H885" fill="none" stroke="#2e3947" stroke-width="1" opacity="0.8"/>
<rect x="14.5" y="285.5" width="871" height="53" fill="none" stroke="#a8b8c8" stroke-width="1"/>
<path d="M15.5 338 V286.5 H885" fill="none" stroke="#2e3947" stroke-width="1" opacity="0.8"/>
<rect x="14.5" y="344.5" width="871" height="56" fill="none" stroke="#a8b8c8" stroke-width="1"/>
<path d="M15.5 400 V345.5 H885" fill="none" stroke="#2e3947" stroke-width="1" opacity="0.8"/>
<line x1="886" y1="48.5" x2="889" y2="48.5" stroke="#a8b8c8"/>
<text x="893" y="55" font-size="11" fill="#f4f4f4" stroke="#f4f4f4" stroke-width="0.2">1.1400</text>
<line x1="886" y1="92.5" x2="889" y2="92.5" stroke="#a8b8c8"/>
<line x1="886" y1="136.5" x2="889" y2="136.5" stroke="#a8b8c8"/>
<text x="893" y="143" font-size="11" fill="#f4f4f4" stroke="#f4f4f4" stroke-width="0.2">1.1200</text>
<line x1="886" y1="180.5" x2="889" y2="180.5" stroke="#a8b8c8"/>
<text x="893" y="187" font-size="11" fill="#f4f4f4" stroke="#f4f4f4" stroke-width="0.2">1.1100</text>
<line x1="886" y1="223.5" x2="889" y2="223.5" stroke="#a8b8c8"/>
<text x="893" y="230" font-size="11" fill="#f4f4f4" stroke="#f4f4f4" stroke-width="0.2">1.1000</text>
<line x1="886" y1="267.5" x2="889" y2="267.5" stroke="#a8b8c8"/>
<text x="893" y="274" font-size="11" fill="#f4f4f4" stroke="#f4f4f4" stroke-width="0.2">1.0900</text>
<line x1="886" y1="290.5" x2="889" y2="290.5" stroke="#a8b8c8"/>
<text x="894" y="297" font-size="11" fill="#f0f0f0">+0.01</text>
<line x1="886" y1="317.5" x2="889" y2="317.5" stroke="#a8b8c8"/>
<text x="894" y="324" font-size="11" fill="#f0f0f0">-0.00</text>
<line x1="886" y1="376.5" x2="889" y2="376.5" stroke="#a8b8c8"/>
<text x="893" y="383.5" font-size="11" fill="#f0f0f0">50</text>
<rect x="885" y="86" width="48" height="21" fill="#ffffff"/>
<text x="894" y="99.8" font-size="11" fill="#2a2a40">1.1291</text>
<rect x="14" y="40" width="31" height="22" fill="#efefef"/>
<rect x="14" y="40" width="31" height="4" fill="#cacaca"/>
<rect x="18.5" y="48.5" width="9" height="9" rx="1.5" fill="url(#rsq)" stroke="#b01818"/>
<rect x="31.5" y="48.5" width="9" height="9" rx="1.5" fill="url(#bsq)" stroke="#1868a8"/>
<line x1="26.5" y1="401" x2="26.5" y2="404" stroke="#a8b8c8"/>
<text x="25.5" y="422.6" font-size="11" fill="#f2f2f2" text-anchor="middle">7</text>
<line x1="46.5" y1="401" x2="46.5" y2="404" stroke="#a8b8c8"/>
<text x="45.5" y="422.6" font-size="11" fill="#f2f2f2" text-anchor="middle">8</text>
<line x1="66.5" y1="401" x2="66.5" y2="404" stroke="#a8b8c8"/>
<text x="65.5" y="422.6" font-size="11" fill="#f2f2f2" text-anchor="middle">11</text>
<line x1="86.5" y1="401" x2="86.5" y2="404" stroke="#a8b8c8"/>
<text x="85.5" y="422.6" font-size="11" fill="#f2f2f2" text-anchor="middle">12</text>
<line x1="106.5" y1="401" x2="106.5" y2="404" stroke="#a8b8c8"/>
<text x="105.5" y="422.6" font-size="11" fill="#f2f2f2" text-anchor="middle">13</text>
<line x1="126.5" y1="401" x2="126.5" y2="404" stroke="#a8b8c8"/>
<text x="125.5" y="422.6" font-size="11" fill="#f2f2f2" text-anchor="middle">14</text>
<line x1="146.5" y1="401" x2="146.5" y2="404" stroke="#a8b8c8"/>
<text x="145.5" y="422.6" font-size="11" fill="#f2f2f2" text-anchor="middle">15</text>
<line x1="166.5" y1="401" x2="166.5" y2="404" stroke="#a8b8c8"/>
<text x="165.5" y="422.6" font-size="11" fill="#f2f2f2" text-anchor="middle">18</text>
<line x1="186.5" y1="401" x2="186.5" y2="404" stroke="#a8b8c8"/>
<text x="185.5" y="422.6" font-size="11" fill="#f2f2f2" text-anchor="middle">19</text>
<line x1="206.5" y1="401" x2="206.5" y2="404" stroke="#a8b8c8"/>
<text x="205.5" y="422.6" font-size="11" fill="#f2f2f2" text-anchor="middle">20</text>
<line x1="226.5" y1="401" x2="226.5" y2="404" stroke="#a8b8c8"/>
<text x="225.5" y="422.6" font-size="11" fill="#f2f2f2" text-anchor="middle">21</text>
<line x1="246.5" y1="401" x2="246.5" y2="404" stroke="#a8b8c8"/>
<text x="245.5" y="422.6" font-size="11" fill="#f2f2f2" text-anchor="middle">22</text>
<line x1="267.5" y1="401" x2="267.5" y2="404" stroke="#a8b8c8"/>
<text x="266.5" y="422.6" font-size="11" fill="#f2f2f2" text-anchor="middle">25</text>
<line x1="287.5" y1="401" x2="287.5" y2="404" stroke="#a8b8c8"/>
<text x="286.5" y="422.6" font-size="11" fill="#f2f2f2" text-anchor="middle">26</text>
<line x1="307.5" y1="401" x2="307.5" y2="404" stroke="#a8b8c8"/>
<text x="306.5" y="422.6" font-size="11" fill="#f2f2f2" text-anchor="middle">27</text>
<line x1="327.5" y1="401" x2="327.5" y2="404" stroke="#a8b8c8"/>
<text x="326.5" y="422.6" font-size="11" fill="#f2f2f2" text-anchor="middle">28</text>
<line x1="347.5" y1="401" x2="347.5" y2="404" stroke="#a8b8c8"/>
<text x="346.5" y="422.6" font-size="11" fill="#f2f2f2" text-anchor="middle">29</text>
<line x1="367.5" y1="401" x2="367.5" y2="404" stroke="#a8b8c8"/>
<text x="366.5" y="422.6" font-size="11" fill="#f2f2f2" text-anchor="middle">1</text>
<line x1="387.5" y1="401" x2="387.5" y2="404" stroke="#a8b8c8"/>
<text x="386.5" y="422.6" font-size="11" fill="#f2f2f2" text-anchor="middle">2</text>
<line x1="407.5" y1="401" x2="407.5" y2="404" stroke="#a8b8c8"/>
<text x="406.5" y="422.6" font-size="11" fill="#f2f2f2" text-anchor="middle">3</text>
<line x1="427.5" y1="401" x2="427.5" y2="404" stroke="#a8b8c8"/>
<text x="426.5" y="422.6" font-size="11" fill="#f2f2f2" text-anchor="middle">4</text>
<line x1="447.5" y1="401" x2="447.5" y2="404" stroke="#a8b8c8"/>
<text x="446.5" y="422.6" font-size="11" fill="#f2f2f2" text-anchor="middle">5</text>
<line x1="467.5" y1="401" x2="467.5" y2="404" stroke="#a8b8c8"/>
<text x="466.5" y="422.6" font-size="11" fill="#f2f2f2" text-anchor="middle">8</text>
<line x1="487.5" y1="401" x2="487.5" y2="404" stroke="#a8b8c8"/>
<text x="486.5" y="422.6" font-size="11" fill="#f2f2f2" text-anchor="middle">9</text>
<line x1="507.5" y1="401" x2="507.5" y2="404" stroke="#a8b8c8"/>
<text x="506.5" y="422.6" font-size="11" fill="#f2f2f2" text-anchor="middle">10</text>
<line x1="527.5" y1="401" x2="527.5" y2="404" stroke="#a8b8c8"/>
<text x="526.5" y="422.6" font-size="11" fill="#f2f2f2" text-anchor="middle">11</text>
<line x1="547.5" y1="401" x2="547.5" y2="404" stroke="#a8b8c8"/>
<text x="546.5" y="422.6" font-size="11" fill="#f2f2f2" text-anchor="middle">12</text>
<line x1="567.5" y1="401" x2="567.5" y2="404" stroke="#a8b8c8"/>
<text x="566.5" y="422.6" font-size="11" fill="#f2f2f2" text-anchor="middle">15</text>
<line x1="587.5" y1="401" x2="587.5" y2="404" stroke="#a8b8c8"/>
<text x="586.5" y="422.6" font-size="11" fill="#f2f2f2" text-anchor="middle">16</text>
<line x1="607.5" y1="401" x2="607.5" y2="404" stroke="#a8b8c8"/>
<text x="606.5" y="422.6" font-size="11" fill="#f2f2f2" text-anchor="middle">17</text>
<line x1="627.5" y1="401" x2="627.5" y2="404" stroke="#a8b8c8"/>
<text x="626.5" y="422.6" font-size="11" fill="#f2f2f2" text-anchor="middle">18</text>
<line x1="647.5" y1="401" x2="647.5" y2="404" stroke="#a8b8c8"/>
<text x="646.5" y="422.6" font-size="11" fill="#f2f2f2" text-anchor="middle">19</text>
<line x1="667.5" y1="401" x2="667.5" y2="404" stroke="#a8b8c8"/>
<text x="666.5" y="422.6" font-size="11" fill="#f2f2f2" text-anchor="middle">22</text>
<line x1="687.5" y1="401" x2="687.5" y2="404" stroke="#a8b8c8"/>
<text x="686.5" y="422.6" font-size="11" fill="#f2f2f2" text-anchor="middle">23</text>
<line x1="707.5" y1="401" x2="707.5" y2="404" stroke="#a8b8c8"/>
<text x="706.5" y="422.6" font-size="11" fill="#f2f2f2" text-anchor="middle">24</text>
<line x1="727.5" y1="401" x2="727.5" y2="404" stroke="#a8b8c8"/>
<text x="726.5" y="422.6" font-size="11" fill="#f2f2f2" text-anchor="middle">25</text>
<line x1="747.5" y1="401" x2="747.5" y2="404" stroke="#a8b8c8"/>
<text x="746.5" y="422.6" font-size="11" fill="#f2f2f2" text-anchor="middle">26</text>
<line x1="768.5" y1="401" x2="768.5" y2="404" stroke="#a8b8c8"/>
<text x="767.5" y="422.6" font-size="11" fill="#f2f2f2" text-anchor="middle">29</text>
<line x1="788.5" y1="401" x2="788.5" y2="404" stroke="#a8b8c8"/>
<text x="787.5" y="422.6" font-size="11" fill="#f2f2f2" text-anchor="middle">30</text>
<line x1="808.5" y1="401" x2="808.5" y2="404" stroke="#a8b8c8"/>
<text x="807.5" y="422.6" font-size="11" fill="#f2f2f2" text-anchor="middle">1</text>
<line x1="828.5" y1="401" x2="828.5" y2="404" stroke="#a8b8c8"/>
<text x="827.5" y="422.6" font-size="11" fill="#f2f2f2" text-anchor="middle">2</text>
<line x1="848.5" y1="401" x2="848.5" y2="404" stroke="#a8b8c8"/>
<text x="847.5" y="422.6" font-size="11" fill="#f2f2f2" text-anchor="middle">3</text>
<line x1="868.5" y1="401" x2="868.5" y2="404" stroke="#a8b8c8"/>
<text x="867.5" y="422.6" font-size="11" fill="#f2f2f2" text-anchor="middle">6</text>
<path d="M14.5 377.5 H77 L78.5 379 V395 L77 396.5 H14.5 Z" fill="url(#lbl)" stroke="#c4d6e0" stroke-width="1"/>
<rect x="14" y="377" width="2" height="27" fill="#c8e6e6"/>
<text x="22" y="391" font-size="11" fill="#eeeeee">Май 2020</text>
<path d="M367.5 377.5 H436 L437.5 379 V395 L436 396.5 H367.5 Z" fill="url(#lbl)" stroke="#c4d6e0" stroke-width="1"/>
<rect x="367" y="377" width="2" height="27" fill="#c8e6e6"/>
<text x="375" y="391" font-size="11" fill="#eeeeee">Июнь 2020</text>
<path d="M808.5 377.5 H876 L877.5 379 V395 L876 396.5 H808.5 Z" fill="url(#lbl)" stroke="#c4d6e0" stroke-width="1"/>
<rect x="808" y="377" width="2" height="27" fill="#c8e6e6"/>
<text x="816" y="391" font-size="11" fill="#eeeeee">Июль 2020</text>
</svg>
</body></html>
